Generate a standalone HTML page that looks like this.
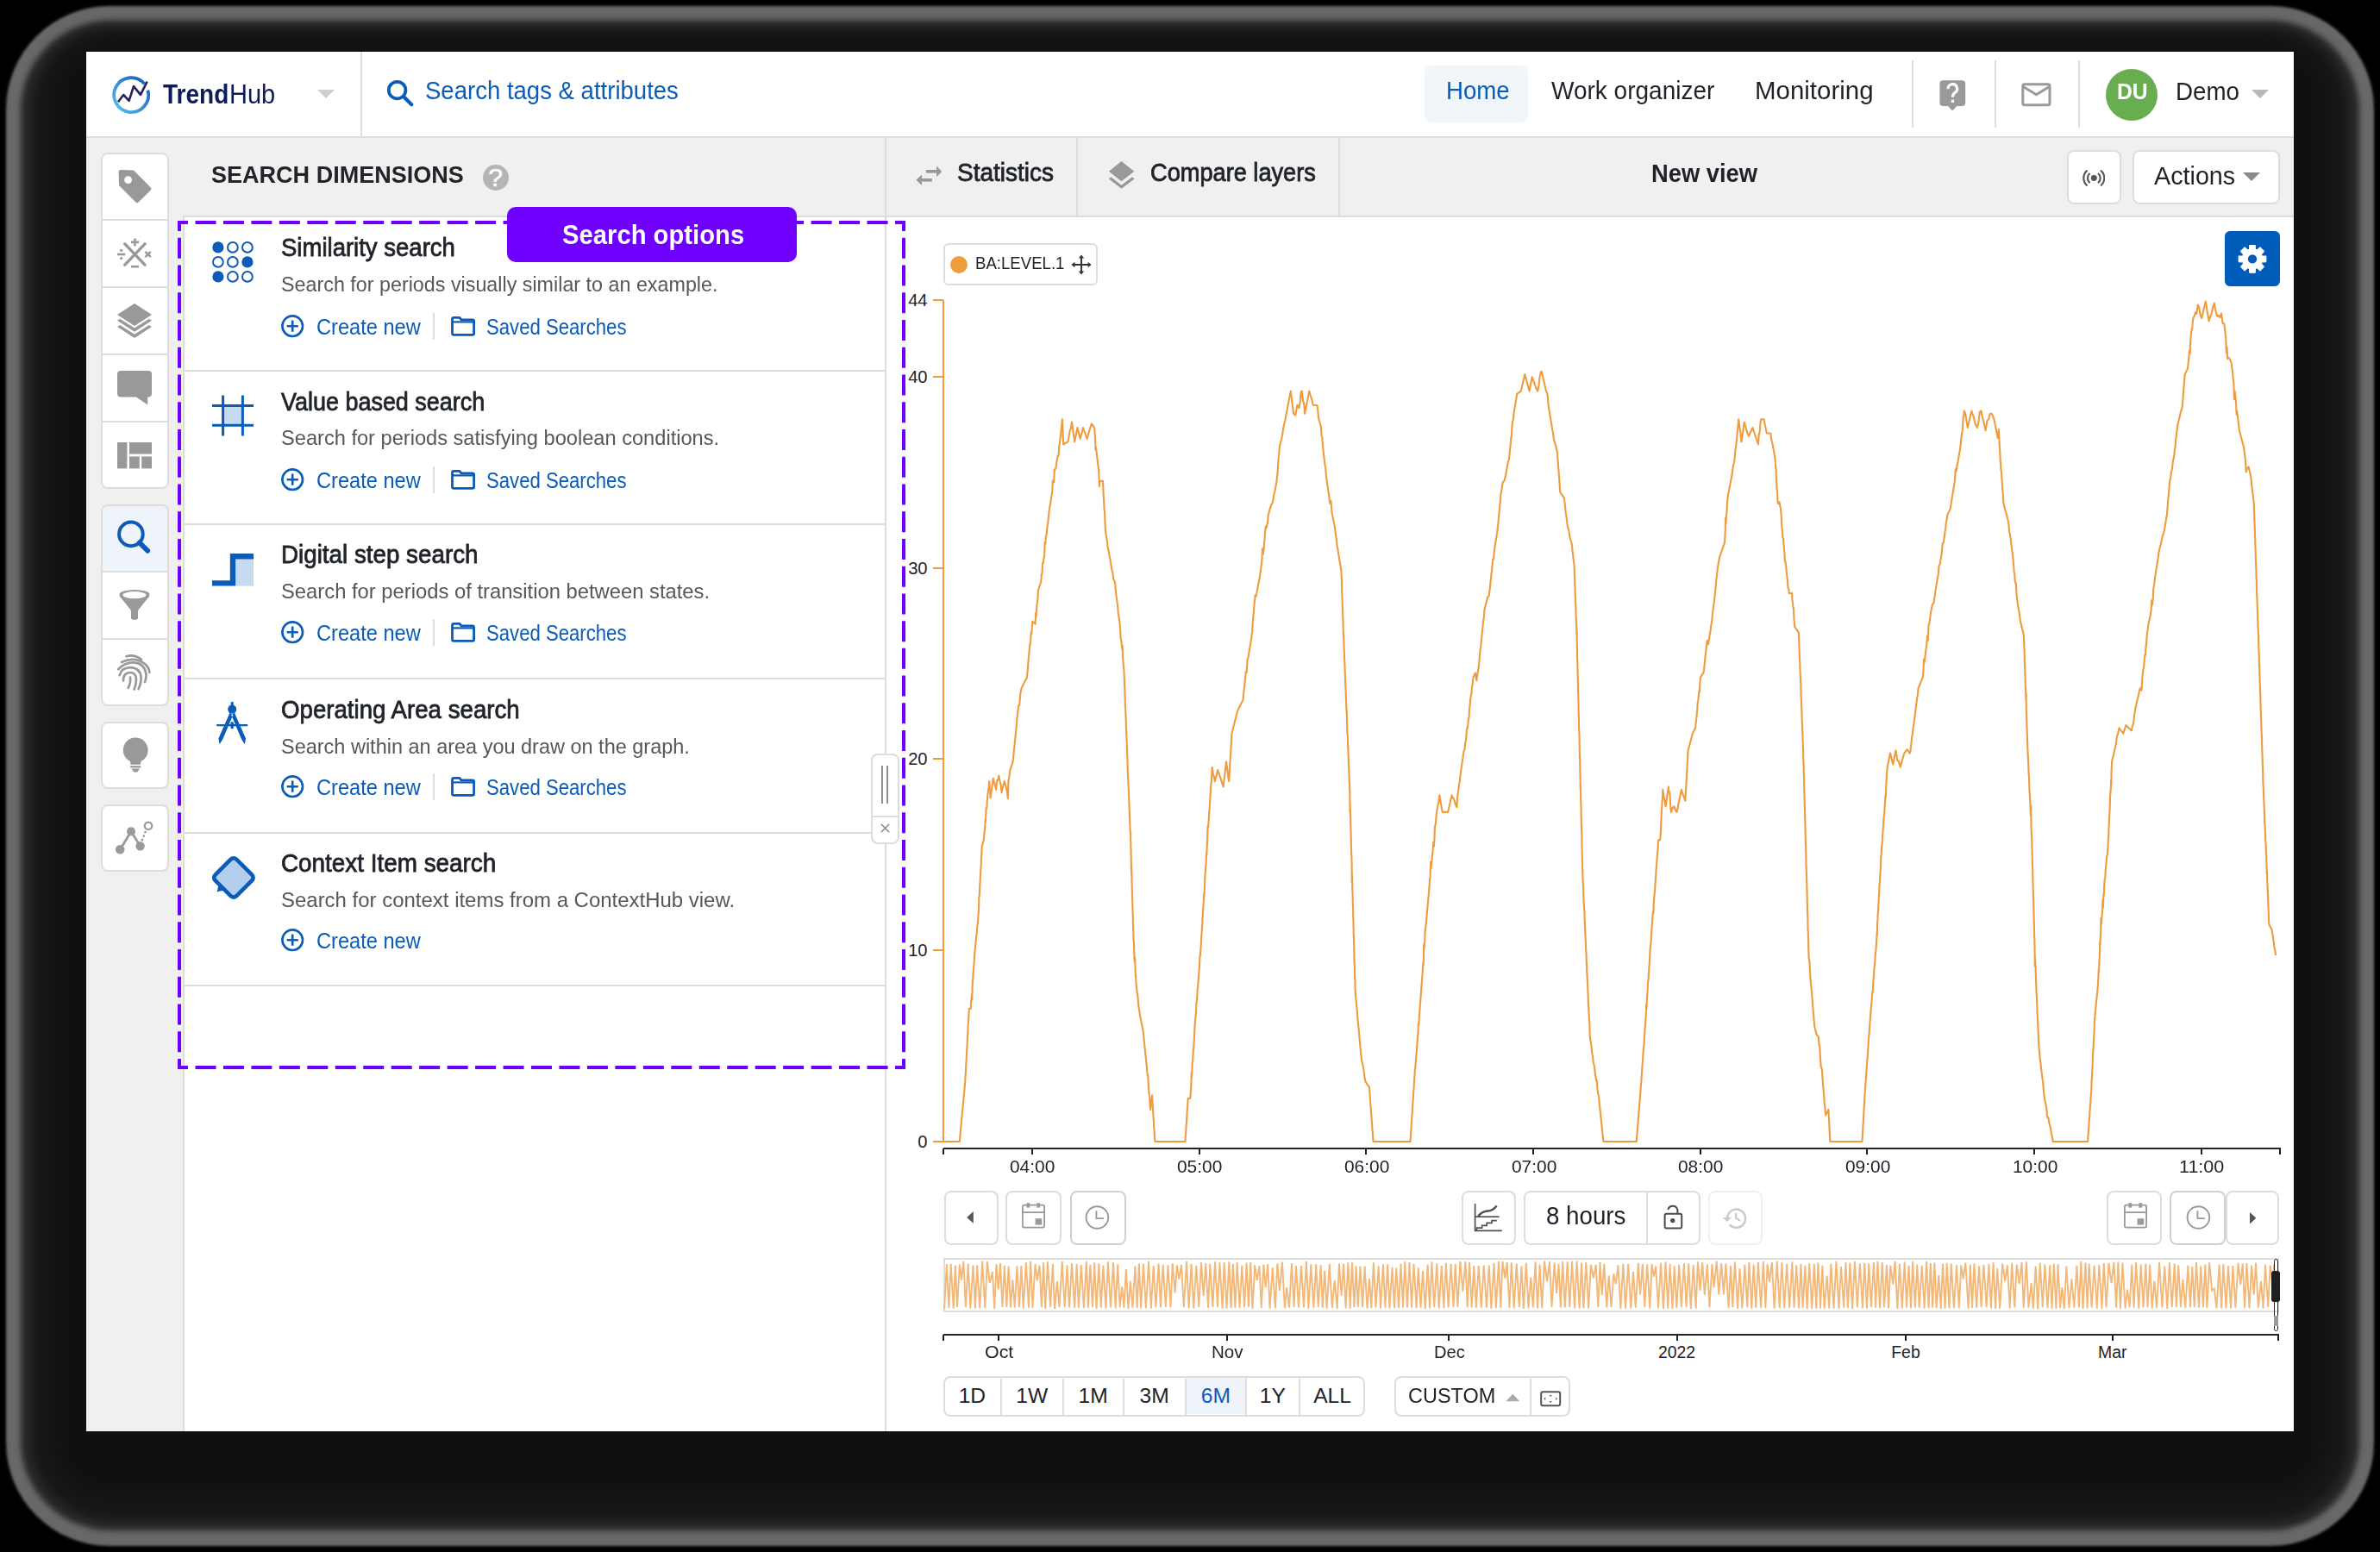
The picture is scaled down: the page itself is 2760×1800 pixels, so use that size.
<!DOCTYPE html>
<html><head><meta charset="utf-8"><title>TrendHub</title>
<style>
html,body{margin:0;padding:0;}
body{width:2760px;height:1800px;background:#000;position:relative;overflow:hidden;font-family:"Liberation Sans", sans-serif;}
.abs{position:absolute;}
.t{position:absolute;white-space:pre;font-family:"Liberation Sans", sans-serif;}
.sh{position:absolute;}
#win{position:absolute;left:50px;top:30px;width:1280px;height:800px;zoom:2;background:#fff;overflow:hidden;}
</style></head><body>
<div class=sh style="left:7px;top:7px;width:2746px;height:1786px;border-radius:120px;background:#686868;filter:blur(1.5px)"></div>
<div class=sh style="left:24px;top:24px;width:2712px;height:1751px;border-radius:104px;background:#2a2a2a;filter:blur(3px)"></div>
<div class=sh style="left:36px;top:34px;width:2688px;height:1729px;border-radius:92px;background:#181818;filter:blur(6px)"></div><div class=sh style="left:62px;top:46px;width:2636px;height:1690px;border-radius:60px;background:#101010;filter:blur(14px)"></div>
<div id=win>
<div class=abs style="left:0;top:0;width:1280px;height:49px;background:#fff;border-bottom:1px solid #dddddd"></div>
<svg class=abs style="left:12.4px;top:12.4px" width="26" height="26" viewBox="0 0 26 26">
<defs><linearGradient id="lg" x1="0" y1="1" x2="1" y2="0"><stop offset="0" stop-color="#5cc0ea"/><stop offset="1" stop-color="#0b5cbc"/></linearGradient></defs>
<path d="M21.3 6.2 A10 10 0 1 0 23.2 9.8" fill="none" stroke="url(#lg)" stroke-width="1.9"/>
<polyline points="6.0,16.6 9.1,12.5 12.3,15.9 15.0,7.6 19.0,12.4 22.8,4.8" fill="none" stroke="#26215e" stroke-width="1.3" stroke-linejoin="round"/>
</svg>
<div class=t style="left:44.65px;top:17.31px;font-size:15.40px;line-height:15.40px;font-weight:700;color:#0c1c5c;transform:scaleX(0.9106);transform-origin:0 0;">Trend</div>
<div class=t style="left:82.93px;top:17.31px;font-size:15.40px;line-height:15.40px;font-weight:400;color:#0c1c5c;transform:scaleX(0.9421);transform-origin:0 0;">Hub</div>
<svg class=abs style="left:134px;top:22px" width="10" height="5" viewBox="0 0 10 5"><path d="M0 0H10L5 5Z" fill="#cfcfcf"/></svg>
<div class=abs style="left:159px;top:0;width:1px;height:49px;background:#dddddd"></div>
<svg class=abs style="left:174px;top:16px" width="16" height="16" viewBox="0 0 16 16">
<circle cx="6.3" cy="6.3" r="4.9" fill="none" stroke="#0a5cb8" stroke-width="1.9"/>
<path d="M9.9 9.9 L14.6 14.6" stroke="#0a5cb8" stroke-width="2.1" stroke-linecap="round"/></svg>
<div class=t style="left:196.52px;top:15.65px;font-size:14.30px;line-height:14.30px;font-weight:400;color:#0a5cb8;transform:scaleX(0.9630);transform-origin:0 0;">Search tags &amp; attributes</div>
<div class=abs style="left:776px;top:8px;width:60px;height:33px;background:#f1f6fb;border-radius:4px"></div>
<div class=t style="left:788.52px;top:15.65px;font-size:14.30px;line-height:14.30px;font-weight:400;color:#0a5cb8;transform:scaleX(0.9665);transform-origin:0 0;">Home</div>
<div class=t style="left:849.41px;top:15.65px;font-size:14.30px;line-height:14.30px;font-weight:400;color:#1f2329;transform:scaleX(0.9792);transform-origin:0 0;">Work organizer</div>
<div class=t style="left:967.48px;top:15.65px;font-size:14.30px;line-height:14.30px;font-weight:400;color:#1f2329;transform:scaleX(1.0302);transform-origin:0 0;">Monitoring</div>
<div class=abs style="left:1058.5px;top:5px;width:1px;height:39px;background:#dddddd"></div>
<div class=abs style="left:1106.5px;top:5px;width:1px;height:39px;background:#dddddd"></div>
<div class=abs style="left:1155.0px;top:5px;width:1px;height:39px;background:#dddddd"></div>
<svg class=abs style="left:1074px;top:16px" width="17" height="19" viewBox="0 0 17 19">
<path d="M2.7 0.6 H13.6 A2 2 0 0 1 15.6 2.6 V13.5 A2 2 0 0 1 13.6 15.5 H10.6 L8.05 18.2 L5.5 15.5 H2.7 A2 2 0 0 1 0.7 13.5 V2.6 A2 2 0 0 1 2.7 0.6 Z" fill="#9a9a9a"/>
<path d="M5.6 5.6 A2.6 2.6 0 1 1 9.6 7.6 C8.6 8.4 8.2 8.9 8.2 10.4" fill="none" stroke="#fff" stroke-width="1.6"/>
<rect x="7.35" y="11.8" width="1.7" height="1.7" fill="#fff"/></svg>
<svg class=abs style="left:1121px;top:17px" width="20" height="16" viewBox="0 0 20 16">
<rect x="1.9" y="1.9" width="15.6" height="12" rx="1" fill="none" stroke="#9a9a9a" stroke-width="1.5"/>
<path d="M2.3 3.4 L9.7 7.9 L17.1 3.4" fill="none" stroke="#9a9a9a" stroke-width="1.5"/></svg>
<div class=abs style="left:1171px;top:10px;width:30px;height:30px;border-radius:50%;background:#68ad4f"></div>
<div class=t style="left:1177.32px;top:17.16px;font-size:12.80px;line-height:12.80px;font-weight:700;color:#ffffff;transform:scaleX(0.9663);transform-origin:0 0;">DU</div>
<div class=t style="left:1211.62px;top:15.90px;font-size:14.30px;line-height:14.30px;font-weight:400;color:#1f2329;transform:scaleX(0.9692);transform-origin:0 0;">Demo</div>
<svg class=abs style="left:1255.5px;top:22px" width="10" height="5" viewBox="0 0 10 5"><path d="M0 0H10L5 5Z" fill="#b9b9b9"/></svg>
<div class=abs style="left:0;top:50px;width:1280px;height:750px;background:#f0f0f0"></div>
<div class=abs style="left:463.5px;top:95px;width:816.5px;height:1px;background:#dddddd"></div>
<svg class=abs style="left:480px;top:65px" width="17" height="14" viewBox="0 0 17 14">
<rect x="7" y="3.5" width="6.3" height="1.8" fill="#999"/><path d="M13 1.3 L16.1 4.45 L13 7.6 Z" fill="#999"/>
<rect x="4.3" y="8.5" width="6.1" height="1.8" fill="#999"/><path d="M4.5 6.2 L1.2 9.4 L4.5 12.5 Z" fill="#999"/></svg>
<div class=t style="left:505.01px;top:62.90px;font-size:14.30px;line-height:14.30px;font-weight:400;color:#1f2329;transform:scaleX(0.9784);transform-origin:0 0;-webkit-text-stroke:0.4px #1f2329;">Statistics</div>
<div class=abs style="left:574px;top:50px;width:1px;height:45px;background:#dddddd"></div>
<svg class=abs style="left:592px;top:63px" width="17" height="17" viewBox="0 0 17 17">
<path d="M8.26 0.55 L15.66 6.43 L8.26 12.08 L0.94 6.43 Z" fill="#999"/>
<path d="M0.94 10.7 L2.17 9.6 L8.26 14.4 L14.5 9.6 L15.8 10.7 L8.26 16.43 Z" fill="#999"/></svg>
<div class=t style="left:616.92px;top:62.90px;font-size:14.30px;line-height:14.30px;font-weight:400;color:#1f2329;transform:scaleX(0.9507);transform-origin:0 0;-webkit-text-stroke:0.4px #1f2329;">Compare layers</div>
<div class=abs style="left:726px;top:50px;width:1px;height:45px;background:#dddddd"></div>
<div class=t style="left:907.53px;top:63.54px;font-size:14.60px;line-height:14.60px;font-weight:700;color:#1f2329;transform:scaleX(0.9365);transform-origin:0 0;">New view</div>
<div class=abs style="left:1148.5px;top:57px;width:29.5px;height:29.5px;background:#fff;border:1px solid #dddddd;border-radius:4px"></div>
<svg class=abs style="left:1157.4px;top:67.3px" width="13.3" height="11.6" viewBox="0 0 16 14">
<circle cx="8" cy="7" r="2.1" fill="#555"/>
<path d="M5.1 3.6 A4.5 4.5 0 0 0 5.1 10.4 M10.9 3.6 A4.5 4.5 0 0 1 10.9 10.4" fill="none" stroke="#555" stroke-width="1.3"/>
<path d="M3.3 1.6 A7 7 0 0 0 3.3 12.4 M12.7 1.6 A7 7 0 0 1 12.7 12.4" fill="none" stroke="#555" stroke-width="1.3"/></svg>
<div class=abs style="left:1186.5px;top:57px;width:83.5px;height:29.5px;background:#fff;border:1px solid #dddddd;border-radius:4px"></div>
<div class=t style="left:1199.20px;top:65.00px;font-size:14.30px;line-height:14.30px;font-weight:400;color:#1f2329;transform:scaleX(1.0045);transform-origin:0 0;">Actions</div>
<svg class=abs style="left:1250.7px;top:70.2px" width="10" height="5" viewBox="0 0 10 5"><path d="M0 0H10L5 5Z" fill="#8a8a8a"/></svg>
<div class=abs style="left:8.5px;top:58.5px;width:37.5px;height:193px;background:#fff;border:1px solid #dddddd;border-radius:4px;overflow:hidden"><div class=abs style="left:0;top:37.5px;width:37.5px;height:1px;background:#dddddd"></div><div class=abs style="left:0;top:76.5px;width:37.5px;height:1px;background:#dddddd"></div><div class=abs style="left:0;top:115.5px;width:37.5px;height:1px;background:#dddddd"></div><div class=abs style="left:0;top:154.5px;width:37.5px;height:1px;background:#dddddd"></div></div>
<div class=abs style="left:8.5px;top:262.5px;width:37.5px;height:115px;background:#fff;border:1px solid #dddddd;border-radius:4px;overflow:hidden"><div class=abs style="left:0;top:0px;width:37.5px;height:38.5px;background:#eef4fa"></div><div class=abs style="left:0;top:37.5px;width:37.5px;height:1px;background:#dddddd"></div><div class=abs style="left:0;top:76.5px;width:37.5px;height:1px;background:#dddddd"></div></div>
<div class=abs style="left:8.5px;top:388.5px;width:37.5px;height:37px;background:#fff;border:1px solid #dddddd;border-radius:4px;overflow:hidden"></div>
<div class=abs style="left:8.5px;top:436.5px;width:37.5px;height:37px;background:#fff;border:1px solid #dddddd;border-radius:4px;overflow:hidden"></div>
<svg class=abs style="left:18px;top:67.8px" width="21" height="21" viewBox="0 0 21 21"><path d="M0.8 2.1 Q0.7 0.4 2.2 0.5 L9.5 0.8 L19.4 10.7 Q20.2 11.5 19.4 12.3 L12.3 19.3 Q11.5 20.1 10.7 19.3 L1.1 9.6 Z" fill="#999999"/><circle cx="6.3" cy="6.3" r="2.2" fill="#fff"/></svg>
<svg class=abs style="left:18px;top:107px" width="21" height="21" viewBox="0 0 21 21"><path d="M4.4 4.4 L16 16.6 M16 4.4 L4.4 16.6" stroke="#999999" stroke-width="1.7" stroke-linecap="round"/><path d="M10.26 1.2 V5.7 M8 3.45 H12.5" stroke="#999999" stroke-width="1.3"/><path d="M8 17.6 H12.5" stroke="#999999" stroke-width="1.3"/><path d="M0 10.5 H4.6" stroke="#999999" stroke-width="1.3"/><circle cx="2.3" cy="8.2" r=".8" fill="#999999"/><circle cx="2.3" cy="12.8" r=".8" fill="#999999"/><path d="M16.2 8.9 L19.4 12.1 M19.4 8.9 L16.2 12.1" stroke="#999999" stroke-width="1.2"/></svg>
<svg class=abs style="left:18px;top:146px" width="20" height="20" viewBox="0 0 20 20"><path d="M0 6.5 L10 0 L20 6.5 L10 13 Z" fill="#999999"/><path d="M0 9.9 L1.6 8.9 L10 14.3 L18.4 8.9 L20 9.9 L10 16.4 Z" fill="#999999"/><path d="M0 13.5 L1.6 12.5 L10 17.9 L18.4 12.5 L20 13.5 L10 20 Z" fill="#999999"/></svg>
<svg class=abs style="left:18px;top:184.9px" width="20" height="20" viewBox="0 0 20 20"><path d="M2 0 H18 A2 2 0 0 1 20 2 V13.2 A2 2 0 0 1 18 15.2 H17.6 V19.8 L11 15.2 H2 A2 2 0 0 1 0 13.2 V2 A2 2 0 0 1 2 0 Z" fill="#999999"/></svg>
<svg class=abs style="left:18px;top:226.4px" width="20" height="16" viewBox="0 0 20 16"><rect x="0" y="0" width="5.7" height="15.2" fill="#999999"/><rect x="7" y="0" width="13" height="6.8" fill="#999999"/><rect x="7" y="8.2" width="5.9" height="7" fill="#999999"/><rect x="14.1" y="8.2" width="5.9" height="7" fill="#999999"/></svg>
<svg class=abs style="left:18px;top:271.7px" width="21" height="21" viewBox="0 0 21 21"><circle cx="7.95" cy="8.2" r="6.9" fill="none" stroke="#0a5cb8" stroke-width="2"/><path d="M12.9 13.2 L17.6 17.9" stroke="#0a5cb8" stroke-width="2.9" stroke-linecap="round"/></svg>
<svg class=abs style="left:18px;top:312.2px" width="20" height="18" viewBox="0 0 20 18"><path d="M1.2 2.7 A8.8 2.7 0 0 1 18.8 2.7 Q18.8 3.8 17.6 5 L13.6 10 Q12 11.5 12 12.6 V16.5 Q12 17.4 10 17.4 Q8 17.4 8 16.5 V12.6 Q8 11.5 6.4 10 L2.4 5 Q1.2 3.8 1.2 2.7 Z" fill="#999999"/><ellipse cx="9.95" cy="3.05" rx="6.8" ry="2.1" fill="#fff"/></svg>
<svg class=abs style="left:18px;top:349.7px" width="20" height="21" viewBox="0 0 20 21"><g fill="none" stroke="#999999" stroke-width="1.35" stroke-linecap="round"><path d="M5.2 1.1 Q10 -0.2 14 3"/><path d="M2.5 4.5 Q10 0.8 16.2 5.6 Q18.6 8 18.7 10.5"/><path d="M0.6 8.6 Q5 4.2 10.5 4.8 Q16 5.6 16.7 11.6 Q16.9 14 16 16"/><path d="M1.3 12.1 Q2.4 7.5 8 7.6 Q13.5 8 13.8 13.5 Q13.9 16.5 12.3 20"/><path d="M3.5 15.2 Q3.5 10.4 7.8 10.5 Q11 10.8 11 14.5 Q11 17.5 9.8 20.2"/><path d="M7.5 13.3 Q8 16 6.4 19.4"/></g></svg>
<svg class=abs style="left:18px;top:397.5px" width="20" height="21" viewBox="0 0 20 21"><circle cx="10.6" cy="7.5" r="7.2" fill="#999999"/><path d="M7.2 12 H14 L13.4 15.9 H7.8 Z" fill="#999999"/><rect x="7.6" y="16.6" width="6" height="1.1" fill="#999999"/><path d="M8.2 18.2 H13 L11.6 20.3 H9.6 Z" fill="#999999"/></svg>
<svg class=abs style="left:15px;top:445px" width="24" height="22" viewBox="0 0 24 22"><path d="M4.7 17.6 L11 7.1 L16.3 15.6" fill="none" stroke="#999999" stroke-width="1.4"/><circle cx="4.6" cy="17.6" r="2.65" fill="#999999"/><circle cx="11" cy="7.1" r="2.5" fill="#999999"/><circle cx="16.3" cy="15.6" r="2.6" fill="#999999"/><path d="M17.2 12.6 L19.6 6.8" stroke="#999999" stroke-width="1.2" stroke-dasharray="1.3 1.1"/><circle cx="21" cy="3.9" r="2.1" fill="none" stroke="#999999" stroke-width="1.1"/></svg>
<div class=t style="left:72.27px;top:63.88px;font-size:14.20px;line-height:14.20px;font-weight:700;color:#212529;transform:scaleX(0.9519);transform-origin:0 0;">SEARCH DIMENSIONS</div>
<div class=abs style="left:229.75px;top:65.6px;width:15px;height:15px;border-radius:50%;background:#b5b5b5"></div>
<div class=t style="left:233.13px;top:65.60px;font-size:15.00px;line-height:15.00px;font-weight:400;color:#ffffff;-webkit-text-stroke:0.25px #fff;">?</div>
<div class=abs style="left:56px;top:95px;width:407.5px;height:705px;background:#fff;border-left:1px solid #dddddd;border-top:1px solid #dddddd"></div>
<div class=abs style="left:57px;top:184.5px;width:406.5px;height:1px;background:#dddddd"></div>
<div class=abs style="left:57px;top:273.5px;width:406.5px;height:1px;background:#dddddd"></div>
<div class=abs style="left:57px;top:363.2px;width:406.5px;height:1px;background:#dddddd"></div>
<div class=abs style="left:57px;top:452.3px;width:406.5px;height:1px;background:#dddddd"></div>
<div class=abs style="left:57px;top:541.1px;width:406.5px;height:1px;background:#dddddd"></div>
<div class=abs style="left:463px;top:50px;width:1px;height:750px;background:#dddddd"></div>
<div class=t style="left:113.22px;top:106.65px;font-size:14.30px;line-height:14.30px;font-weight:400;color:#1f2329;transform:scaleX(0.9626);transform-origin:0 0;-webkit-text-stroke:0.4px #1f2329;">Similarity search</div>
<div class=t style="left:113.22px;top:128.92px;font-size:12.20px;line-height:12.20px;font-weight:400;color:#575757;transform:scaleX(0.9555);transform-origin:0 0;">Search for periods visually similar to an example.</div>
<svg class=abs style="left:113.2px;top:152.4px" width="14" height="14" viewBox="0 0 14 14"><circle cx="6.6" cy="6.6" r="5.9" fill="none" stroke="#0a5cb8" stroke-width="1.3"/><path d="M6.6 3.3 V9.9 M3.3 6.6 H9.9" stroke="#0a5cb8" stroke-width="1.3"/></svg>
<div class=t style="left:133.53px;top:153.33px;font-size:12.60px;line-height:12.60px;font-weight:400;color:#0a5cb8;transform:scaleX(0.9378);transform-origin:0 0;">Create new</div>
<div class=abs style="left:201.2px;top:151.3px;width:1px;height:15.6px;background:#dddddd"></div>
<svg class=abs style="left:211.6px;top:153.4px" width="15" height="12" viewBox="0 0 15 12"><path d="M0.75 1.6 Q0.75 0.7 1.6 0.7 H4.9 L6 1.9 H12.4 Q13.3 1.9 13.3 2.8 V9.9 Q13.3 10.7 12.4 10.7 H1.6 Q0.75 10.7 0.75 9.9 Z" fill="none" stroke="#0a5cb8" stroke-width="1.4"/><path d="M0.75 3.2 H13.3" stroke="#0a5cb8" stroke-width="1.1"/></svg>
<div class=t style="left:231.95px;top:153.33px;font-size:12.60px;line-height:12.60px;font-weight:400;color:#0a5cb8;transform:scaleX(0.8790);transform-origin:0 0;">Saved Searches</div>
<div class=t style="left:113.23px;top:195.80px;font-size:14.30px;line-height:14.30px;font-weight:400;color:#1f2329;transform:scaleX(0.9426);transform-origin:0 0;-webkit-text-stroke:0.4px #1f2329;">Value based search</div>
<div class=t style="left:113.21px;top:218.17px;font-size:12.20px;line-height:12.20px;font-weight:400;color:#575757;transform:scaleX(0.9683);transform-origin:0 0;">Search for periods satisfying boolean conditions.</div>
<svg class=abs style="left:113.2px;top:241.6px" width="14" height="14" viewBox="0 0 14 14"><circle cx="6.6" cy="6.6" r="5.9" fill="none" stroke="#0a5cb8" stroke-width="1.3"/><path d="M6.6 3.3 V9.9 M3.3 6.6 H9.9" stroke="#0a5cb8" stroke-width="1.3"/></svg>
<div class=t style="left:133.53px;top:242.53px;font-size:12.60px;line-height:12.60px;font-weight:400;color:#0a5cb8;transform:scaleX(0.9378);transform-origin:0 0;">Create new</div>
<div class=abs style="left:201.2px;top:240.5px;width:1px;height:15.6px;background:#dddddd"></div>
<svg class=abs style="left:211.6px;top:242.6px" width="15" height="12" viewBox="0 0 15 12"><path d="M0.75 1.6 Q0.75 0.7 1.6 0.7 H4.9 L6 1.9 H12.4 Q13.3 1.9 13.3 2.8 V9.9 Q13.3 10.7 12.4 10.7 H1.6 Q0.75 10.7 0.75 9.9 Z" fill="none" stroke="#0a5cb8" stroke-width="1.4"/><path d="M0.75 3.2 H13.3" stroke="#0a5cb8" stroke-width="1.1"/></svg>
<div class=t style="left:231.95px;top:242.53px;font-size:12.60px;line-height:12.60px;font-weight:400;color:#0a5cb8;transform:scaleX(0.8790);transform-origin:0 0;">Saved Searches</div>
<div class=t style="left:113.21px;top:284.50px;font-size:14.30px;line-height:14.30px;font-weight:400;color:#1f2329;transform:scaleX(0.9714);transform-origin:0 0;-webkit-text-stroke:0.4px #1f2329;">Digital step search</div>
<div class=t style="left:113.21px;top:306.87px;font-size:12.20px;line-height:12.20px;font-weight:400;color:#575757;transform:scaleX(0.9751);transform-origin:0 0;">Search for periods of transition between states.</div>
<svg class=abs style="left:113.2px;top:330.09999999999997px" width="14" height="14" viewBox="0 0 14 14"><circle cx="6.6" cy="6.6" r="5.9" fill="none" stroke="#0a5cb8" stroke-width="1.3"/><path d="M6.6 3.3 V9.9 M3.3 6.6 H9.9" stroke="#0a5cb8" stroke-width="1.3"/></svg>
<div class=t style="left:133.53px;top:331.03px;font-size:12.60px;line-height:12.60px;font-weight:400;color:#0a5cb8;transform:scaleX(0.9378);transform-origin:0 0;">Create new</div>
<div class=abs style="left:201.2px;top:329.0px;width:1px;height:15.6px;background:#dddddd"></div>
<svg class=abs style="left:211.6px;top:331.09999999999997px" width="15" height="12" viewBox="0 0 15 12"><path d="M0.75 1.6 Q0.75 0.7 1.6 0.7 H4.9 L6 1.9 H12.4 Q13.3 1.9 13.3 2.8 V9.9 Q13.3 10.7 12.4 10.7 H1.6 Q0.75 10.7 0.75 9.9 Z" fill="none" stroke="#0a5cb8" stroke-width="1.4"/><path d="M0.75 3.2 H13.3" stroke="#0a5cb8" stroke-width="1.1"/></svg>
<div class=t style="left:231.95px;top:331.03px;font-size:12.60px;line-height:12.60px;font-weight:400;color:#0a5cb8;transform:scaleX(0.8790);transform-origin:0 0;">Saved Searches</div>
<div class=t style="left:113.22px;top:374.60px;font-size:14.30px;line-height:14.30px;font-weight:400;color:#1f2329;transform:scaleX(0.9670);transform-origin:0 0;-webkit-text-stroke:0.4px #1f2329;">Operating Area search</div>
<div class=t style="left:113.22px;top:396.97px;font-size:12.20px;line-height:12.20px;font-weight:400;color:#575757;transform:scaleX(0.9628);transform-origin:0 0;">Search within an area you draw on the graph.</div>
<svg class=abs style="left:113.2px;top:419.5px" width="14" height="14" viewBox="0 0 14 14"><circle cx="6.6" cy="6.6" r="5.9" fill="none" stroke="#0a5cb8" stroke-width="1.3"/><path d="M6.6 3.3 V9.9 M3.3 6.6 H9.9" stroke="#0a5cb8" stroke-width="1.3"/></svg>
<div class=t style="left:133.53px;top:420.43px;font-size:12.60px;line-height:12.60px;font-weight:400;color:#0a5cb8;transform:scaleX(0.9378);transform-origin:0 0;">Create new</div>
<div class=abs style="left:201.2px;top:418.40000000000003px;width:1px;height:15.6px;background:#dddddd"></div>
<svg class=abs style="left:211.6px;top:420.5px" width="15" height="12" viewBox="0 0 15 12"><path d="M0.75 1.6 Q0.75 0.7 1.6 0.7 H4.9 L6 1.9 H12.4 Q13.3 1.9 13.3 2.8 V9.9 Q13.3 10.7 12.4 10.7 H1.6 Q0.75 10.7 0.75 9.9 Z" fill="none" stroke="#0a5cb8" stroke-width="1.4"/><path d="M0.75 3.2 H13.3" stroke="#0a5cb8" stroke-width="1.1"/></svg>
<div class=t style="left:231.95px;top:420.43px;font-size:12.60px;line-height:12.60px;font-weight:400;color:#0a5cb8;transform:scaleX(0.8790);transform-origin:0 0;">Saved Searches</div>
<div class=t style="left:113.21px;top:463.60px;font-size:14.30px;line-height:14.30px;font-weight:400;color:#1f2329;transform:scaleX(0.9743);transform-origin:0 0;-webkit-text-stroke:0.4px #1f2329;">Context Item search</div>
<div class=t style="left:113.21px;top:485.77px;font-size:12.20px;line-height:12.20px;font-weight:400;color:#575757;transform:scaleX(0.9825);transform-origin:0 0;">Search for context items from a ContextHub view.</div>
<svg class=abs style="left:113.2px;top:508.4px" width="14" height="14" viewBox="0 0 14 14"><circle cx="6.6" cy="6.6" r="5.9" fill="none" stroke="#0a5cb8" stroke-width="1.3"/><path d="M6.6 3.3 V9.9 M3.3 6.6 H9.9" stroke="#0a5cb8" stroke-width="1.3"/></svg>
<div class=t style="left:133.53px;top:509.33px;font-size:12.60px;line-height:12.60px;font-weight:400;color:#0a5cb8;transform:scaleX(0.9378);transform-origin:0 0;">Create new</div>
<svg class=abs style="left:72.9px;top:109.9px" width="24" height="24" viewBox="0 0 24 24"><circle cx="3.45" cy="3.45" r="3.3" fill="#0a5cb8" stroke="#0a5cb8" stroke-width="0"/><circle cx="11.95" cy="3.45" r="2.95" fill="none" stroke="#0a5cb8" stroke-width="1.0"/><circle cx="20.45" cy="3.45" r="2.95" fill="none" stroke="#0a5cb8" stroke-width="1.0"/><circle cx="3.45" cy="11.95" r="2.95" fill="none" stroke="#0a5cb8" stroke-width="1.0"/><circle cx="11.95" cy="11.95" r="2.95" fill="none" stroke="#0a5cb8" stroke-width="1.0"/><circle cx="20.45" cy="11.95" r="3.3" fill="#0a5cb8" stroke="#0a5cb8" stroke-width="0"/><circle cx="3.45" cy="20.45" r="3.3" fill="#0a5cb8" stroke="#0a5cb8" stroke-width="0"/><circle cx="11.95" cy="20.45" r="2.95" fill="none" stroke="#0a5cb8" stroke-width="1.0"/><circle cx="20.45" cy="20.45" r="2.95" fill="none" stroke="#0a5cb8" stroke-width="1.0"/></svg>
<svg class=abs style="left:72.9px;top:198.8px" width="24" height="24" viewBox="0 0 24 24"><rect x="6.3" y="6.2" width="11.4" height="11.4" fill="#c6dbf0"/><path d="M6.3 0.3 V23.8 M17.7 0.3 V23.8 M0 6.2 H24 M0 17.6 H24" stroke="#0a5cb8" stroke-width="1.5"/></svg>
<svg class=abs style="left:72.9px;top:291.1px" width="24" height="19" viewBox="0 0 24 19"><rect x="13.6" y="3.2" width="10.4" height="15.6" fill="#c6dbf0"/><path d="M0 17.2 H12 V1.6 H24" fill="none" stroke="#0a5cb8" stroke-width="3.2"/></svg>
<svg class=abs style="left:72.9px;top:377.2px" width="24" height="26" viewBox="0 0 24 26"><rect x="10.9" y="0" width="1.4" height="2.6" fill="#0a5cb8"/><circle cx="11.6" cy="4.3" r="2.5" fill="#0a5cb8"/><path d="M10.3 6.2 L12.1 7.6 L6.2 21.6 L4.3 24.6 L3.7 21.2 Z M12.9 6.2 L11.1 7.6 L17 21.6 L18.9 24.6 L19.5 21.2 Z" fill="#0a5cb8"/><path d="M2.6 13.6 H20.6" stroke="#0a5cb8" stroke-width="1.1"/><rect x="10.75" y="11.6" width="1.7" height="4" rx=".6" fill="#0a5cb8"/></svg>
<svg class=abs style="left:72.4px;top:466.2px" width="26" height="26" viewBox="0 0 26 26"><path d="M13 1.6 Q13.9 1.6 14.6 2.3 L23.5 11.2 Q24.3 12 24.3 13 Q24.3 13.9 23.5 14.7 L14.6 23.6 Q13.9 24.3 13 24.3 Q12 24.3 11.3 23.6 L2.4 14.7 Q1.6 13.9 1.6 13 Q1.6 12 2.4 11.2 L11.3 2.3 Q12 1.6 13 1.6 Z" fill="#b3cfee" stroke="#0a5cb8" stroke-width="2.3"/><path d="M4.2 17.6 L3.3 21.2 L7.3 20.2 Z" fill="#0a5cb8"/></svg>
<div class=abs style="left:464px;top:96px;width:816px;height:704px;background:#fff"></div>
<div class=abs style="left:1240px;top:104px;width:32px;height:32px;background:#005cb9;border-radius:3px"></div>
<svg class=abs style="left:1240px;top:104px" width="32" height="32" viewBox="0 0 32 32"><path d="M21.54 14.49 L23.89 14.60 L23.89 17.80 L21.54 17.91 L21.13 18.91 L22.71 20.65 L20.45 22.91 L18.71 21.33 L17.71 21.74 L17.60 24.09 L14.40 24.09 L14.29 21.74 L13.29 21.33 L11.55 22.91 L9.29 20.65 L10.87 18.91 L10.46 17.91 L8.11 17.80 L8.11 14.60 L10.46 14.49 L10.87 13.49 L9.29 11.75 L11.55 9.49 L13.29 11.07 L14.29 10.66 L14.40 8.31 L17.60 8.31 L17.71 10.66 L18.71 11.07 L20.45 9.49 L22.71 11.75 L21.13 13.49 Z" fill="#fff" stroke="#fff" stroke-width="0.6" stroke-linejoin="round"/><circle cx="16" cy="16.2" r="2.6" fill="#005cb9"/></svg>
<div class=abs style="left:496.8px;top:111px;width:87.5px;height:22.6px;background:#fff;border:1px solid #dddddd;border-radius:3px"></div>
<div class=abs style="left:501px;top:118.4px;width:10px;height:10px;border-radius:50%;background:#ef9c3e"></div>
<div class=t style="left:515.63px;top:117.68px;font-size:10.30px;line-height:10.30px;font-weight:400;color:#1f2329;transform:scaleX(0.9038);transform-origin:0 0;">BA:LEVEL.1</div>
<svg class=abs style="left:570.8px;top:117.5px" width="12" height="12" viewBox="0 0 12 12"><path d="M6 1 V11 M1 6 H11" stroke="#333" stroke-width="1"/><path d="M6 0.2 L4.4 2.2 H7.6 Z M6 11.8 L4.4 9.8 H7.6 Z M0.2 6 L2.2 4.4 V7.6 Z M11.8 6 L9.8 4.4 V7.6 Z" fill="#333"/></svg>
<div class=abs style="left:496.5px;top:144px;width:1px;height:488.5px;background:#ef9c3e"></div>
<div class=abs style="left:491px;top:631.50px;width:6px;height:1px;background:#ef9c3e"></div>
<div class=t style="left:482.18px;top:626.95px;font-size:10.10px;line-height:10.10px;font-weight:400;color:#1f2329;">0</div>
<div class=abs style="left:491px;top:520.60px;width:6px;height:1px;background:#ef9c3e"></div>
<div class=t style="left:476.57px;top:516.05px;font-size:10.10px;line-height:10.10px;font-weight:400;color:#1f2329;">10</div>
<div class=abs style="left:491px;top:409.70px;width:6px;height:1px;background:#ef9c3e"></div>
<div class=t style="left:476.57px;top:405.15px;font-size:10.10px;line-height:10.10px;font-weight:400;color:#1f2329;">20</div>
<div class=abs style="left:491px;top:298.80px;width:6px;height:1px;background:#ef9c3e"></div>
<div class=t style="left:476.57px;top:294.25px;font-size:10.10px;line-height:10.10px;font-weight:400;color:#1f2329;">30</div>
<div class=abs style="left:491px;top:187.90px;width:6px;height:1px;background:#ef9c3e"></div>
<div class=t style="left:476.57px;top:183.35px;font-size:10.10px;line-height:10.10px;font-weight:400;color:#1f2329;">40</div>
<div class=abs style="left:491px;top:143.54px;width:6px;height:1px;background:#ef9c3e"></div>
<div class=t style="left:476.57px;top:138.99px;font-size:10.10px;line-height:10.10px;font-weight:400;color:#1f2329;">44</div>
<div class=abs style="left:496.8px;top:635.5px;width:475.2px;height:1px;background:#1f2329"></div>
<div class=abs style="left:496.8px;top:635.5px;width:775.7px;height:1px;background:#1f2329"></div>
<div class=abs style="left:496.50px;top:636px;width:1px;height:3.5px;background:#1f2329"></div>
<div class=abs style="left:547.90px;top:636px;width:1px;height:3.5px;background:#1f2329"></div>
<div class=abs style="left:644.75px;top:636px;width:1px;height:3.5px;background:#1f2329"></div>
<div class=abs style="left:741.60px;top:636px;width:1px;height:3.5px;background:#1f2329"></div>
<div class=abs style="left:838.45px;top:636px;width:1px;height:3.5px;background:#1f2329"></div>
<div class=abs style="left:935.30px;top:636px;width:1px;height:3.5px;background:#1f2329"></div>
<div class=abs style="left:1032.15px;top:636px;width:1px;height:3.5px;background:#1f2329"></div>
<div class=abs style="left:1129.00px;top:636px;width:1px;height:3.5px;background:#1f2329"></div>
<div class=abs style="left:1225.85px;top:636px;width:1px;height:3.5px;background:#1f2329"></div>
<div class=abs style="left:1271.30px;top:636px;width:1px;height:3.5px;background:#1f2329"></div>
<div class=t style="left:535.70px;top:641.28px;font-size:10.30px;line-height:10.30px;font-weight:400;color:#1f2329;transform:scaleX(1.0138);transform-origin:0 0;">04:00</div>
<div class=t style="left:632.55px;top:641.28px;font-size:10.30px;line-height:10.30px;font-weight:400;color:#1f2329;transform:scaleX(1.0138);transform-origin:0 0;">05:00</div>
<div class=t style="left:729.40px;top:641.28px;font-size:10.30px;line-height:10.30px;font-weight:400;color:#1f2329;transform:scaleX(1.0138);transform-origin:0 0;">06:00</div>
<div class=t style="left:826.25px;top:641.28px;font-size:10.30px;line-height:10.30px;font-weight:400;color:#1f2329;transform:scaleX(1.0138);transform-origin:0 0;">07:00</div>
<div class=t style="left:923.10px;top:641.28px;font-size:10.30px;line-height:10.30px;font-weight:400;color:#1f2329;transform:scaleX(1.0138);transform-origin:0 0;">08:00</div>
<div class=t style="left:1019.95px;top:641.28px;font-size:10.30px;line-height:10.30px;font-weight:400;color:#1f2329;transform:scaleX(1.0138);transform-origin:0 0;">09:00</div>
<div class=t style="left:1116.80px;top:641.28px;font-size:10.30px;line-height:10.30px;font-weight:400;color:#1f2329;transform:scaleX(1.0138);transform-origin:0 0;">10:00</div>
<div class=t style="left:1213.63px;top:641.28px;font-size:10.30px;line-height:10.30px;font-weight:400;color:#1f2329;transform:scaleX(1.0457);transform-origin:0 0;">11:00</div>
<svg class=abs style="left:0;top:0" width="1280" height="800" viewBox="0 0 1280 800"><path d="M497.00 632.00 L500.13 632.00 L503.26 631.99 L506.39 631.99 L506.64 629.31 L506.89 626.63 L507.14 623.95 L507.39 621.27 L507.64 618.60 L507.89 615.92 L508.14 613.24 L508.39 610.56 L508.64 607.88 L508.89 605.20 L509.15 602.52 L509.40 599.84 L509.65 597.16 L509.79 593.41 L509.93 591.88 L510.07 589.23 L510.22 586.27 L510.36 584.43 L510.50 580.50 L510.64 578.65 L510.79 576.01 L510.93 573.36 L511.07 570.72 L511.21 568.08 L511.35 563.83 L511.50 562.79 L511.64 560.14 L511.78 557.50 L511.92 554.85 L512.90 554.85 L513.09 550.33 L513.28 549.43 L513.47 546.72 L513.66 549.90 L513.85 541.29 L514.04 538.58 L514.23 535.87 L514.42 533.16 L514.61 530.44 L514.80 528.89 L514.99 525.02 L515.18 522.31 L515.46 519.52 L515.74 516.73 L516.02 513.94 L516.29 511.70 L516.57 508.36 L516.85 505.57 L517.13 502.78 L517.27 500.13 L517.42 499.07 L517.56 494.85 L517.70 489.84 L517.84 489.56 L517.99 486.91 L518.13 484.27 L518.27 481.62 L518.41 478.98 L518.56 476.33 L518.70 473.69 L518.84 472.33 L518.98 468.40 L519.13 465.76 L519.27 463.11 L519.41 460.47 L520.39 457.21 L520.61 454.61 L520.84 452.01 L521.07 450.17 L521.30 445.43 L521.53 446.40 L521.75 438.70 L521.98 438.99 L522.21 437.84 L522.44 433.78 L522.66 431.18 L522.99 428.46 L523.32 426.56 L523.64 423.04 L523.86 426.29 L524.08 429.34 L524.29 432.80 L524.70 429.96 L525.11 427.11 L525.51 424.26 L525.92 421.41 L526.73 424.67 L527.55 427.92 L528.09 422.57 L528.63 422.25 L529.17 419.78 L529.72 422.86 L530.26 424.95 L530.80 429.55 L531.62 425.85 L532.43 423.04 L533.24 426.29 L534.06 429.55 L534.38 433.12 L534.71 422.70 L535.03 421.74 L535.36 419.13 L535.68 416.53 L537.31 411.65 L537.58 408.94 L537.85 406.22 L538.12 403.51 L538.40 400.80 L538.67 398.09 L538.94 395.37 L539.21 392.66 L539.48 389.95 L539.75 386.19 L540.02 384.53 L540.29 381.81 L540.57 379.10 L541.11 378.99 L541.65 372.06 L542.19 369.34 L542.84 368.03 L543.49 366.73 L544.15 365.18 L544.80 364.13 L545.45 362.83 L545.72 360.12 L545.99 357.40 L546.26 353.38 L546.53 350.09 L546.80 347.88 L547.07 343.80 L547.35 343.84 L547.62 341.13 L547.89 336.71 L548.16 337.67 L548.43 332.99 L548.70 330.28 L550.33 331.91 L550.56 325.42 L550.79 327.77 L551.03 323.54 L551.26 320.75 L551.49 318.89 L551.72 317.30 L551.96 312.38 L553.58 307.50 L553.91 303.03 L554.24 302.70 L554.56 296.35 L554.89 296.43 L555.21 293.67 L555.54 292.86 L555.86 284.47 L556.19 285.37 L556.51 280.58 L556.84 279.83 L557.16 276.14 L557.49 273.97 L557.82 271.05 L558.14 267.97 L558.47 265.19 L559.01 262.54 L559.55 258.68 L560.09 255.42 L560.42 248.79 L560.74 249.66 L561.07 249.67 L561.40 242.29 L561.72 242.40 L562.26 241.25 L562.81 236.98 L563.35 234.27 L563.76 234.29 L564.16 228.57 L564.57 225.72 L564.98 222.88 L565.30 219.62 L565.63 216.37 L565.95 213.11 L566.08 216.04 L566.21 219.05 L566.34 221.90 L566.47 224.83 L566.60 227.76 L567.90 226.94 L569.21 226.13 L569.78 223.28 L570.35 219.97 L570.92 218.31 L571.48 214.74 L571.89 217.59 L572.30 220.57 L572.71 223.28 L573.11 226.13 L573.65 223.42 L574.20 220.71 L574.74 217.99 L575.55 221.25 L576.37 224.50 L577.18 221.25 L577.99 217.99 L579.13 221.25 L580.27 224.50 L581.14 221.24 L582.01 218.65 L582.88 215.72 L584.50 217.99 L584.75 220.30 L584.99 223.69 L585.24 230.75 L585.48 229.39 L585.81 232.18 L586.13 234.97 L586.46 237.66 L586.78 240.54 L587.11 243.33 L587.43 252.09 L587.76 248.91 L589.39 248.91 L589.53 249.42 L589.68 253.76 L589.83 256.90 L589.98 259.57 L590.13 262.23 L590.27 264.89 L590.42 265.90 L590.57 268.49 L590.72 272.71 L590.87 275.54 L591.01 278.21 L591.48 281.00 L591.94 283.79 L592.41 288.03 L592.87 289.80 L593.34 292.60 L593.80 294.94 L594.27 297.73 L594.73 300.52 L595.20 302.27 L595.66 306.07 L596.13 306.49 L596.59 308.50 L597.06 314.18 L597.52 317.26 L597.85 319.87 L598.17 322.47 L598.50 326.43 L598.82 328.18 L599.15 330.28 L599.39 332.94 L599.62 335.61 L599.86 340.88 L600.10 340.93 L600.33 343.60 L600.57 346.26 L600.81 344.25 L601.04 351.58 L601.28 354.25 L601.52 356.91 L601.75 359.57 L601.86 362.27 L601.96 364.88 L602.06 367.54 L602.16 369.07 L602.27 372.85 L602.37 375.50 L602.47 379.60 L602.58 380.81 L602.68 383.47 L602.78 385.52 L602.88 388.78 L602.99 391.43 L603.09 394.09 L603.19 396.74 L603.30 399.40 L603.40 402.05 L603.50 404.71 L603.60 407.50 L603.71 410.02 L603.81 413.96 L603.91 416.95 L604.01 419.99 L604.12 422.09 L604.22 423.63 L604.32 425.95 L604.43 428.61 L604.53 431.26 L604.63 433.92 L604.73 436.57 L604.84 439.23 L604.94 441.37 L605.04 444.54 L605.15 447.19 L605.25 449.85 L605.35 452.48 L605.45 452.36 L605.56 452.63 L605.66 460.47 L605.74 462.22 L605.81 465.74 L605.89 468.37 L605.97 475.16 L606.05 471.42 L606.12 477.96 L606.20 475.68 L606.28 481.53 L606.36 484.18 L606.43 486.08 L606.51 489.45 L606.59 492.08 L606.67 494.72 L606.74 497.35 L606.82 499.99 L606.90 500.75 L606.98 505.23 L607.05 507.89 L607.13 510.53 L607.21 513.16 L607.29 515.80 L607.45 515.73 L607.61 521.50 L607.77 527.39 L607.94 525.14 L608.10 526.05 L608.26 531.42 L608.43 536.43 L608.59 535.36 L608.75 540.59 L608.91 541.83 L609.24 545.04 L609.56 546.58 L609.89 549.97 L610.22 553.50 L610.54 555.40 L610.87 558.11 L611.52 561.36 L612.17 564.62 L612.82 567.87 L613.08 570.48 L613.34 573.08 L613.60 575.68 L613.86 578.29 L614.12 580.89 L614.38 583.49 L614.64 586.10 L614.90 587.92 L615.16 591.31 L615.42 593.91 L615.66 593.67 L615.89 599.13 L616.12 602.28 L616.35 605.07 L616.59 606.10 L616.82 610.61 L617.05 613.44 L617.38 610.73 L617.70 608.01 L618.03 605.30 L618.19 607.97 L618.35 610.64 L618.52 613.31 L618.68 615.98 L618.84 618.65 L619.00 621.31 L619.17 623.98 L619.33 626.65 L619.49 629.32 L619.65 631.99 L622.58 631.99 L625.51 631.99 L628.44 631.99 L631.37 631.99 L634.30 631.99 L637.23 631.99 L637.41 629.20 L637.59 626.42 L637.77 623.64 L637.95 620.85 L638.13 618.07 L638.31 615.28 L638.50 612.50 L638.68 609.71 L638.86 606.93 L640.16 606.93 L640.33 604.25 L640.50 602.34 L640.68 598.89 L640.85 591.91 L641.02 594.43 L641.19 591.35 L641.36 586.01 L641.54 585.49 L641.71 582.81 L641.88 579.47 L642.05 577.44 L642.23 575.87 L642.40 572.08 L642.57 569.40 L642.74 565.27 L642.92 563.88 L643.09 561.36 L643.29 558.72 L643.49 558.07 L643.70 551.72 L643.90 550.79 L644.10 548.85 L644.31 543.50 L644.51 542.85 L644.72 540.21 L644.92 537.56 L645.12 535.00 L645.33 532.27 L645.53 529.63 L645.73 523.93 L645.94 524.34 L646.14 520.80 L646.34 519.05 L646.49 516.45 L646.65 512.07 L646.80 511.24 L646.95 508.64 L647.10 507.38 L647.25 502.31 L647.41 500.83 L647.56 497.28 L647.71 495.62 L647.86 493.01 L648.01 490.41 L648.17 487.81 L648.32 489.38 L648.47 484.33 L648.62 480.00 L648.79 477.39 L648.96 474.79 L649.13 472.18 L649.30 471.57 L649.47 465.17 L649.64 466.00 L649.81 461.77 L649.97 459.30 L650.14 453.78 L650.31 448.98 L650.48 450.03 L650.65 448.75 L650.82 446.08 L650.99 444.09 L651.16 440.94 L651.33 438.34 L651.50 436.20 L651.67 433.13 L651.84 430.52 L652.01 427.92 L652.17 425.32 L652.34 423.87 L652.51 421.38 L652.68 417.51 L652.85 414.90 L653.39 418.99 L653.94 420.39 L654.48 423.04 L655.29 419.78 L656.11 416.53 L657.19 419.78 L658.28 423.04 L659.36 426.29 L659.69 422.64 L660.01 420.44 L660.34 417.51 L660.66 414.58 L660.99 411.65 L661.40 414.50 L661.80 417.34 L662.21 421.07 L662.62 423.04 L662.78 420.27 L662.94 417.51 L663.10 413.68 L663.27 411.97 L663.43 409.21 L663.59 406.44 L663.76 403.67 L663.92 400.91 L664.08 397.82 L664.24 395.37 L664.89 392.77 L665.55 390.17 L666.20 387.56 L666.85 384.96 L667.50 382.36 L668.15 381.05 L668.80 379.75 L669.45 378.32 L670.10 377.15 L670.75 375.85 L671.02 373.13 L671.30 369.86 L671.57 368.38 L671.84 365.00 L672.11 362.29 L672.38 359.57 L672.84 359.96 L673.31 352.65 L673.77 351.20 L674.24 348.41 L674.70 345.62 L675.17 342.83 L675.63 340.04 L675.87 337.26 L676.10 336.89 L676.33 331.68 L676.56 328.89 L676.80 326.10 L677.03 323.31 L677.26 320.52 L677.80 315.20 L678.35 315.80 L678.89 312.76 L679.43 309.67 L679.97 306.96 L680.52 304.24 L680.89 301.45 L681.26 298.66 L681.63 295.87 L682.00 288.16 L682.38 291.41 L682.75 289.05 L683.12 284.72 L683.50 279.18 L683.88 275.32 L684.26 276.28 L684.64 274.40 L685.02 273.18 L685.40 268.44 L686.21 265.59 L687.03 262.93 L687.84 261.67 L688.65 257.05 L689.20 254.91 L689.74 251.73 L690.28 248.91 L690.51 246.12 L690.75 244.63 L690.98 241.00 L691.21 237.75 L691.44 233.97 L691.68 232.86 L691.91 229.39 L692.48 226.54 L693.05 224.82 L693.62 221.60 L694.19 217.99 L694.71 215.39 L695.23 213.48 L695.75 210.18 L696.27 207.85 L696.79 204.98 L697.33 202.26 L697.87 199.55 L698.42 196.84 L698.74 199.44 L699.07 202.05 L699.39 204.65 L699.72 207.25 L700.04 209.86 L701.13 210.82 L702.21 204.86 L703.30 206.60 L703.84 203.35 L704.38 197.21 L704.93 196.84 L705.25 200.06 L705.58 202.44 L705.90 203.19 L706.23 205.13 L706.55 209.86 L707.07 207.25 L707.60 204.65 L708.12 202.05 L708.64 199.44 L709.16 196.84 L709.92 199.55 L710.68 201.71 L711.44 204.98 L713.71 204.98 L714.15 207.96 L714.58 212.49 L715.02 214.27 L715.45 215.71 L715.88 216.96 L716.32 222.88 L716.64 223.23 L716.97 228.57 L717.29 231.42 L717.62 234.27 L717.95 237.12 L718.27 239.96 L718.60 240.95 L718.92 245.66 L719.30 248.37 L719.68 251.08 L720.06 254.24 L720.44 256.21 L720.82 259.22 L721.20 261.93 L721.72 260.51 L722.24 267.14 L722.76 269.68 L723.28 272.35 L723.80 274.95 L724.18 277.66 L724.56 280.38 L724.94 282.84 L725.32 286.76 L725.70 288.51 L726.08 291.22 L726.62 294.48 L727.17 297.73 L727.71 300.99 L727.81 303.67 L727.90 306.35 L728.00 305.45 L728.09 314.43 L728.19 314.39 L728.28 317.60 L728.38 319.75 L728.48 323.95 L728.57 325.96 L728.67 328.78 L728.76 330.47 L728.86 334.57 L728.95 336.66 L729.05 338.51 L729.15 340.76 L729.24 343.87 L729.34 346.55 L729.44 349.18 L729.55 351.80 L729.65 354.43 L729.76 357.27 L729.86 359.68 L729.97 362.74 L730.07 365.71 L730.18 367.55 L730.28 370.01 L730.39 372.80 L730.49 376.22 L730.60 378.05 L730.70 380.68 L730.81 383.30 L730.91 382.28 L731.02 388.55 L731.12 391.17 L731.23 394.62 L731.33 396.42 L731.44 397.66 L731.54 401.67 L731.65 404.30 L731.75 406.92 L731.86 408.76 L731.96 413.31 L732.07 414.80 L732.17 417.42 L732.28 420.05 L732.38 422.67 L732.49 425.30 L732.59 427.92 L732.66 428.18 L732.74 441.13 L732.81 435.73 L732.88 438.48 L732.95 440.94 L733.03 443.54 L733.10 446.15 L733.17 448.75 L733.24 451.35 L733.31 453.96 L733.39 456.56 L733.46 460.93 L733.53 461.77 L733.60 464.37 L733.68 466.98 L733.75 469.58 L733.82 472.18 L733.89 481.54 L733.97 477.35 L734.04 480.00 L734.11 484.18 L734.18 486.29 L734.26 487.81 L734.33 490.41 L734.40 492.99 L734.47 495.62 L734.54 495.81 L734.62 500.83 L734.69 503.43 L734.76 506.84 L734.83 510.17 L734.91 512.40 L734.98 513.84 L735.05 516.45 L735.12 519.05 L735.20 521.66 L735.27 528.44 L735.34 526.36 L735.41 529.47 L735.48 532.07 L735.56 537.77 L735.63 537.28 L735.70 537.44 L735.77 542.49 L735.85 545.09 L736.10 548.42 L736.35 550.66 L736.60 553.19 L736.85 556.11 L737.10 558.86 L737.35 562.38 L737.60 564.37 L737.85 567.12 L738.10 569.88 L738.35 572.63 L738.60 575.38 L738.85 578.39 L739.10 580.89 L739.53 584.88 L739.97 586.58 L740.40 588.52 L740.84 591.36 L741.27 594.85 L741.70 597.16 L743.98 600.42 L744.17 603.05 L744.36 605.68 L744.55 608.31 L744.74 610.94 L744.93 613.57 L745.12 616.20 L745.31 618.84 L745.50 621.47 L745.69 624.10 L745.88 626.73 L746.07 629.36 L746.26 631.99 L748.95 631.99 L751.63 631.99 L754.32 631.99 L757.00 631.99 L759.69 631.99 L762.37 631.99 L765.06 631.99 L767.74 631.99 L767.92 629.31 L768.09 626.63 L768.27 623.95 L768.44 621.27 L768.62 618.60 L768.79 615.92 L768.97 613.24 L769.14 610.56 L769.32 607.88 L769.49 605.20 L769.67 602.52 L769.85 599.84 L770.02 597.16 L770.23 593.32 L770.43 590.31 L770.64 589.18 L770.85 586.51 L771.06 583.85 L771.26 581.91 L771.47 578.63 L771.68 575.86 L771.88 573.20 L772.09 570.54 L772.30 567.87 L772.49 563.15 L772.69 564.38 L772.88 560.06 L773.08 557.46 L773.28 554.85 L773.47 552.25 L773.67 549.65 L773.86 547.04 L774.06 544.44 L774.25 541.83 L774.44 539.58 L774.63 536.41 L774.82 534.44 L775.01 530.99 L775.20 528.27 L775.39 529.72 L775.58 517.66 L775.77 520.14 L775.96 517.42 L776.15 515.32 L776.34 508.94 L776.53 509.29 L776.78 506.53 L777.03 503.78 L777.28 501.03 L777.53 498.27 L777.78 495.35 L778.03 492.76 L778.28 490.01 L778.53 487.26 L778.78 483.84 L779.03 479.19 L779.28 478.99 L779.53 469.89 L779.78 473.49 L780.06 470.77 L780.33 468.06 L780.60 465.11 L780.87 462.64 L781.14 458.25 L781.41 460.98 L781.68 457.24 L781.95 449.56 L782.23 448.76 L782.50 446.99 L782.77 443.65 L783.04 440.94 L783.58 437.79 L784.12 435.23 L784.67 431.18 L785.21 434.43 L785.75 437.69 L786.29 440.94 L787.92 440.94 L789.55 440.94 L790.31 437.69 L791.07 434.43 L791.83 431.18 L793.13 433.82 L794.43 437.69 L794.76 438.08 L795.08 431.54 L795.41 429.87 L795.73 427.37 L796.06 424.67 L796.44 422.60 L796.82 419.24 L797.20 416.35 L797.58 413.82 L797.96 411.11 L798.34 408.39 L798.77 405.68 L799.20 404.88 L799.64 400.94 L800.07 398.62 L800.51 392.64 L800.94 392.12 L801.21 389.41 L801.48 386.70 L801.75 386.32 L802.02 381.27 L802.30 379.30 L802.57 375.85 L802.89 373.62 L803.22 371.88 L803.54 368.03 L803.87 366.44 L804.19 362.83 L804.85 361.53 L805.50 360.22 L806.15 364.67 L806.80 360.47 L807.45 356.32 L807.72 353.61 L807.99 349.84 L808.26 347.06 L808.53 345.47 L808.81 342.76 L809.08 340.04 L809.35 337.33 L809.62 334.62 L809.89 331.91 L810.16 329.20 L810.43 328.13 L810.70 323.77 L811.35 321.17 L812.01 318.56 L812.66 315.96 L813.31 315.59 L813.96 310.75 L814.23 307.52 L814.50 305.45 L814.77 302.62 L815.04 300.85 L815.31 297.19 L815.59 294.48 L816.02 294.18 L816.45 289.05 L816.89 286.34 L817.32 283.63 L817.76 280.92 L818.19 278.21 L818.47 275.36 L818.76 272.72 L819.04 269.66 L819.33 266.81 L819.61 263.11 L819.90 261.12 L820.18 256.71 L820.47 255.42 L821.34 249.61 L822.20 248.91 L823.07 245.66 L823.53 243.06 L823.98 240.45 L824.44 237.85 L824.89 236.51 L825.35 232.64 L825.62 229.66 L825.89 227.69 L826.16 223.69 L826.43 223.18 L826.71 217.72 L826.98 214.74 L827.41 213.32 L827.85 209.32 L828.28 206.60 L828.71 203.89 L829.15 201.18 L829.58 198.47 L831.86 196.84 L832.62 193.58 L833.38 190.33 L834.14 187.07 L835.01 190.33 L835.87 193.31 L836.74 196.84 L837.28 194.13 L837.83 191.41 L838.37 188.70 L839.45 191.41 L840.54 194.85 L841.62 196.84 L842.19 193.99 L842.76 188.80 L843.33 185.92 L843.90 185.45 L844.55 188.30 L845.20 191.14 L845.85 193.99 L846.51 196.84 L846.94 197.68 L847.37 199.24 L847.81 204.87 L848.24 207.69 L848.68 210.40 L849.11 213.11 L849.56 215.72 L850.02 218.54 L850.48 220.92 L850.93 224.66 L851.39 226.13 L852.20 228.97 L853.01 232.64 L853.22 236.37 L853.42 238.34 L853.62 241.18 L853.83 244.03 L854.03 246.88 L854.24 249.73 L854.44 252.58 L854.64 255.42 L855.78 257.05 L856.92 258.68 L857.25 261.39 L857.57 264.10 L857.90 267.67 L858.22 269.53 L858.55 272.24 L858.87 274.95 L859.63 277.40 L860.39 282.18 L861.15 284.72 L861.48 285.87 L861.80 289.84 L862.13 292.53 L862.45 295.25 L862.78 297.73 L862.87 299.31 L862.97 303.09 L863.07 305.77 L863.16 308.46 L863.26 311.14 L863.35 314.74 L863.45 316.50 L863.54 319.18 L863.64 319.98 L863.74 324.54 L863.83 327.94 L863.93 328.65 L864.02 332.58 L864.12 335.26 L864.21 338.33 L864.31 335.22 L864.41 343.30 L864.47 344.68 L864.53 352.18 L864.60 352.06 L864.66 353.77 L864.73 356.38 L864.79 359.00 L864.85 361.77 L864.92 364.23 L864.98 366.85 L865.04 370.81 L865.11 372.08 L865.17 374.70 L865.24 377.31 L865.30 379.16 L865.36 385.00 L865.43 385.16 L865.49 387.78 L865.55 391.17 L865.62 393.01 L865.68 395.63 L865.75 395.63 L865.81 399.92 L865.87 403.90 L865.94 406.10 L866.00 409.96 L866.07 408.79 L866.13 413.95 L866.19 417.02 L866.26 419.93 L866.32 421.79 L866.38 427.79 L866.45 425.20 L866.51 428.20 L866.58 432.74 L866.64 434.50 L866.70 436.47 L866.77 438.66 L866.83 443.28 L866.89 445.34 L866.96 447.17 L867.02 449.13 L867.09 453.19 L867.15 451.88 L867.21 458.43 L867.28 461.04 L867.34 463.26 L867.41 466.28 L867.47 468.89 L867.53 471.51 L867.60 474.12 L867.66 476.74 L867.78 480.83 L867.90 480.90 L868.01 484.61 L868.13 487.23 L868.25 493.30 L868.37 492.43 L868.48 495.09 L868.60 497.28 L868.72 498.76 L868.84 502.96 L868.95 505.58 L869.07 508.20 L869.19 510.82 L869.31 513.45 L869.42 516.07 L869.54 518.69 L869.66 521.31 L869.78 523.93 L869.89 528.25 L870.01 529.18 L870.13 534.62 L870.25 534.42 L870.36 537.04 L870.48 539.67 L870.60 542.29 L870.72 544.91 L870.83 547.53 L870.95 551.96 L871.07 552.77 L871.19 555.70 L871.30 558.02 L871.42 560.64 L871.54 562.76 L871.66 562.23 L871.77 567.51 L871.89 571.13 L872.30 573.97 L872.71 576.47 L873.11 580.69 L873.52 582.52 L873.93 586.53 L874.33 587.41 L874.74 591.06 L875.15 593.91 L875.53 596.71 L875.91 596.69 L876.29 602.05 L876.67 604.76 L877.05 605.88 L877.42 610.18 L877.71 612.91 L877.99 615.63 L878.28 618.36 L878.56 621.09 L878.85 623.81 L879.13 626.54 L879.42 629.26 L879.70 631.99 L882.44 631.99 L885.18 631.99 L887.92 631.99 L890.66 631.99 L893.40 631.99 L896.14 631.99 L898.88 631.99 L899.10 629.16 L899.33 626.33 L899.56 623.49 L899.79 620.66 L900.02 617.83 L900.24 615.00 L900.47 612.17 L900.70 609.34 L900.93 606.51 L901.16 603.67 L901.35 600.82 L901.54 598.31 L901.73 596.66 L901.92 592.95 L902.11 590.27 L902.30 587.59 L902.50 585.66 L902.69 582.23 L902.88 579.55 L903.07 576.69 L903.26 576.30 L903.45 571.51 L903.64 568.83 L903.84 565.96 L904.03 563.47 L904.22 560.79 L904.41 558.11 L904.59 552.26 L904.77 554.85 L904.95 549.97 L905.13 546.79 L905.31 544.55 L905.49 539.77 L905.68 539.12 L905.86 536.41 L906.04 533.70 L906.22 530.99 L906.40 528.27 L906.58 525.56 L906.76 521.32 L906.94 519.05 L907.12 518.25 L907.30 516.22 L907.48 512.00 L907.66 509.29 L907.87 506.63 L908.08 503.96 L908.29 501.30 L908.49 498.64 L908.70 499.66 L908.91 493.31 L909.11 490.65 L909.32 488.40 L909.53 487.28 L909.74 482.66 L909.94 480.00 L910.15 477.15 L910.35 474.06 L910.55 471.45 L910.76 468.60 L910.96 465.76 L911.16 464.01 L911.37 460.06 L911.57 457.21 L912.55 457.21 L912.69 455.82 L912.84 453.71 L912.99 451.84 L913.14 446.56 L913.29 443.90 L913.43 441.24 L913.58 438.55 L913.73 435.84 L913.88 433.25 L914.03 432.00 L914.17 427.92 L914.72 431.91 L915.26 434.43 L915.80 437.69 L916.21 435.22 L916.62 431.99 L917.02 429.14 L917.43 426.29 L917.75 429.22 L918.08 429.34 L918.41 433.02 L918.73 439.60 L919.06 440.94 L919.87 438.30 L920.68 437.69 L921.50 439.90 L922.31 440.94 L922.83 438.34 L923.35 435.73 L923.87 433.13 L924.39 430.80 L924.91 427.92 L926.05 431.28 L927.19 434.43 L927.34 430.91 L927.49 429.10 L927.64 426.44 L927.78 423.78 L927.93 421.12 L928.08 418.45 L928.23 415.79 L928.38 412.14 L928.52 410.85 L928.67 406.44 L928.82 405.14 L929.69 401.88 L930.56 398.63 L931.42 395.37 L932.24 393.75 L933.05 392.12 L933.32 389.41 L933.59 387.42 L933.86 383.98 L934.14 381.27 L934.41 377.19 L934.68 375.85 L934.94 373.25 L935.20 370.64 L935.46 371.42 L935.72 365.53 L935.98 362.83 L936.96 361.20 L937.93 359.57 L938.19 356.97 L938.45 354.37 L938.71 351.30 L938.97 349.16 L939.24 346.55 L939.89 341.43 L940.54 343.68 L941.19 339.26 L941.84 335.16 L942.22 332.18 L942.60 329.96 L942.98 326.04 L943.36 323.23 L943.74 320.25 L944.12 317.26 L944.39 314.55 L944.66 311.84 L944.93 309.13 L945.20 305.75 L945.47 303.70 L945.74 300.99 L946.40 296.46 L947.05 293.25 L947.70 291.22 L948.84 287.97 L949.98 284.72 L950.16 282.00 L950.34 279.29 L950.52 270.45 L950.70 273.87 L950.88 271.15 L951.06 267.77 L951.24 267.58 L951.42 263.02 L951.60 260.31 L952.15 255.96 L952.69 253.80 L953.23 250.54 L954.21 245.66 L954.59 242.95 L954.97 240.23 L955.35 238.88 L955.73 236.88 L956.11 232.10 L956.48 229.39 L956.76 226.67 L957.03 224.28 L957.30 221.86 L957.57 218.54 L957.84 216.26 L958.11 213.11 L958.44 215.72 L958.76 218.32 L959.09 220.15 L959.41 223.53 L959.74 226.13 L960.15 223.28 L960.55 220.80 L960.96 217.59 L961.37 214.74 L962.23 217.62 L963.10 221.01 L963.97 222.88 L964.73 221.25 L965.49 219.62 L966.25 217.99 L967.33 221.25 L968.42 224.64 L969.50 227.76 L969.83 221.42 L970.15 221.90 L970.48 218.97 L970.81 214.67 L971.13 213.11 L972.76 213.11 L973.30 215.82 L973.84 218.54 L974.39 221.25 L976.66 221.25 L977.18 225.24 L977.71 227.11 L978.23 230.04 L978.75 232.97 L979.27 235.90 L979.43 238.50 L979.59 241.53 L979.76 241.17 L979.92 246.31 L980.08 248.91 L980.24 253.12 L980.41 254.12 L980.57 254.66 L980.73 259.93 L980.90 261.93 L981.71 261.17 L982.52 265.19 L982.75 267.98 L982.99 270.77 L983.22 276.47 L983.45 277.19 L983.68 281.55 L983.92 281.78 L984.15 284.72 L984.42 287.43 L984.69 290.64 L984.96 295.63 L985.23 295.56 L985.51 297.59 L985.78 300.99 L986.10 303.59 L986.43 306.20 L986.75 310.78 L987.08 311.40 L987.40 314.01 L989.03 314.01 L989.26 318.26 L989.50 319.59 L989.73 322.38 L989.96 322.78 L990.19 328.16 L990.43 330.75 L990.66 333.54 L991.80 335.16 L992.94 336.79 L993.04 339.42 L993.14 342.05 L993.24 345.34 L993.34 347.31 L993.44 350.71 L993.54 352.03 L993.64 355.19 L993.74 358.74 L993.84 360.45 L993.94 362.59 L994.04 365.71 L994.14 365.88 L994.24 370.96 L994.34 375.04 L994.44 375.98 L994.54 378.85 L994.64 381.17 L994.74 383.83 L994.84 388.04 L994.94 389.37 L995.04 390.74 L995.14 394.62 L995.24 397.25 L995.34 399.88 L995.44 402.51 L995.54 405.14 L995.61 407.76 L995.68 411.23 L995.75 413.78 L995.82 412.81 L995.89 418.23 L995.97 420.85 L996.04 421.62 L996.11 426.96 L996.18 428.70 L996.25 431.32 L996.32 433.94 L996.39 436.55 L996.46 439.17 L996.53 441.79 L996.60 444.99 L996.67 447.02 L996.74 449.57 L996.81 452.26 L996.89 456.20 L996.96 457.50 L997.03 460.11 L997.10 462.73 L997.17 465.35 L997.24 468.67 L997.31 474.52 L997.38 473.20 L997.45 475.82 L997.52 478.44 L997.59 481.06 L997.66 483.68 L997.73 486.29 L997.81 488.91 L997.88 492.78 L997.95 494.15 L998.02 498.70 L998.09 500.54 L998.16 502.00 L998.23 505.08 L998.30 509.08 L998.37 509.85 L998.44 512.47 L998.51 514.53 L998.58 517.71 L998.65 520.33 L998.73 522.94 L998.80 525.56 L999.01 526.26 L999.23 527.68 L999.45 532.65 L999.66 535.98 L999.88 539.32 L1000.10 541.18 L1000.31 543.79 L1000.53 545.32 L1000.75 549.00 L1000.97 551.60 L1001.18 554.20 L1001.40 556.88 L1001.62 559.41 L1001.83 562.01 L1002.05 564.62 L1003.19 569.66 L1004.33 571.13 L1004.59 573.73 L1004.85 576.33 L1005.11 576.30 L1005.37 581.54 L1005.63 585.90 L1005.89 588.50 L1006.15 589.35 L1006.41 589.84 L1006.67 594.56 L1006.93 597.16 L1007.16 599.95 L1007.40 603.65 L1007.63 605.53 L1007.86 609.97 L1008.09 611.11 L1008.33 613.90 L1008.56 616.69 L1010.19 613.44 L1010.33 616.09 L1010.47 618.74 L1010.61 621.39 L1010.75 624.04 L1010.88 626.69 L1011.02 629.34 L1011.16 631.99 L1013.81 631.99 L1016.46 631.99 L1019.11 631.99 L1021.76 631.99 L1024.41 631.99 L1027.06 631.99 L1029.72 631.99 L1029.88 629.16 L1030.04 626.33 L1030.20 623.49 L1030.37 620.66 L1030.53 617.83 L1030.69 615.00 L1030.85 612.17 L1031.02 609.34 L1031.18 606.51 L1031.34 603.67 L1031.53 600.99 L1031.73 598.31 L1031.92 595.63 L1032.11 592.95 L1032.30 590.27 L1032.49 587.59 L1032.68 584.91 L1032.87 582.23 L1033.07 579.77 L1033.26 576.87 L1033.45 573.21 L1033.64 571.51 L1033.83 568.83 L1034.02 566.15 L1034.21 563.42 L1034.41 560.79 L1034.60 558.11 L1034.81 555.50 L1035.03 553.54 L1035.25 551.23 L1035.47 547.69 L1035.68 545.09 L1035.90 545.35 L1036.12 539.88 L1036.33 537.28 L1036.55 534.67 L1036.77 530.78 L1036.98 529.98 L1037.20 526.86 L1037.42 523.13 L1037.63 521.66 L1037.85 519.05 L1038.00 516.39 L1038.15 513.73 L1038.30 511.06 L1038.44 512.45 L1038.59 504.66 L1038.74 503.07 L1038.89 499.48 L1039.04 498.43 L1039.18 495.25 L1039.33 492.42 L1039.48 489.76 L1039.63 486.68 L1039.78 482.78 L1039.92 481.77 L1040.07 479.77 L1040.22 476.43 L1040.37 475.22 L1040.51 471.12 L1040.66 466.77 L1040.81 465.79 L1040.96 463.13 L1041.11 460.47 L1041.31 459.85 L1041.51 455.18 L1041.72 452.53 L1041.92 449.89 L1042.12 447.25 L1042.33 443.50 L1042.53 443.31 L1042.73 439.31 L1042.91 436.60 L1043.10 434.42 L1043.28 431.18 L1043.46 432.10 L1043.64 425.75 L1043.82 423.04 L1044.00 418.92 L1044.18 416.75 L1044.36 414.90 L1044.90 412.19 L1045.45 409.48 L1045.99 406.77 L1046.80 410.02 L1047.62 413.28 L1048.16 410.56 L1048.70 407.85 L1049.24 405.14 L1050.11 410.73 L1050.98 411.65 L1051.85 414.90 L1052.61 412.19 L1053.37 409.48 L1054.13 406.77 L1055.75 404.56 L1057.38 406.77 L1057.79 405.22 L1058.19 401.07 L1058.60 397.40 L1059.01 395.37 L1059.33 391.66 L1059.66 390.17 L1059.98 387.56 L1060.31 384.96 L1060.63 382.36 L1060.96 379.75 L1061.29 377.15 L1061.61 374.54 L1061.94 373.00 L1062.26 369.34 L1063.56 366.08 L1064.87 362.83 L1065.19 360.04 L1065.52 352.23 L1065.84 353.99 L1066.17 351.67 L1066.49 348.88 L1066.82 346.09 L1067.14 343.30 L1067.52 338.82 L1067.89 341.37 L1068.26 332.43 L1068.63 332.14 L1069.00 329.35 L1069.38 326.56 L1069.75 323.77 L1070.51 320.52 L1071.27 319.74 L1072.03 314.01 L1072.49 311.22 L1072.96 308.11 L1073.42 305.37 L1073.89 302.85 L1074.35 297.84 L1074.82 297.27 L1075.28 294.48 L1075.82 291.22 L1076.37 285.19 L1076.91 284.72 L1077.29 282.00 L1077.67 279.29 L1078.05 276.58 L1078.43 273.17 L1078.81 271.15 L1079.19 268.44 L1080.00 266.81 L1080.81 265.19 L1081.25 262.47 L1081.68 259.76 L1082.12 257.05 L1082.55 254.78 L1082.98 251.63 L1083.42 248.91 L1083.88 242.08 L1084.35 243.33 L1084.81 239.63 L1085.28 237.75 L1085.74 234.97 L1086.21 232.18 L1086.67 229.39 L1086.96 226.74 L1087.24 223.73 L1087.53 221.45 L1087.81 220.09 L1088.10 216.16 L1088.38 211.93 L1088.67 210.87 L1088.95 208.23 L1089.60 210.21 L1090.25 214.19 L1090.90 217.99 L1091.66 214.74 L1092.42 211.48 L1093.18 208.23 L1094.27 211.48 L1095.35 215.85 L1096.44 217.99 L1097.20 214.74 L1097.95 208.90 L1098.71 208.23 L1099.37 211.53 L1100.02 213.84 L1100.67 216.77 L1101.32 219.62 L1102.19 214.08 L1103.05 213.11 L1103.92 209.86 L1105.06 210.08 L1106.20 213.11 L1106.74 215.82 L1107.29 218.54 L1107.83 221.25 L1108.37 223.96 L1108.91 218.90 L1109.45 229.39 L1109.64 232.10 L1109.83 236.85 L1110.02 237.85 L1110.21 242.34 L1110.40 243.02 L1110.59 245.66 L1110.78 248.37 L1110.97 251.08 L1111.16 253.80 L1111.35 255.78 L1111.54 259.22 L1111.73 261.93 L1112.60 265.35 L1113.47 268.44 L1114.34 271.70 L1114.71 274.49 L1115.08 278.18 L1115.45 280.07 L1115.82 282.37 L1116.20 286.08 L1116.57 288.43 L1116.94 291.22 L1117.23 294.07 L1117.51 297.07 L1117.79 301.49 L1118.08 302.62 L1118.36 306.60 L1118.65 308.31 L1118.93 308.09 L1119.22 314.01 L1119.60 317.51 L1119.98 320.92 L1120.36 322.64 L1120.74 324.86 L1121.12 327.57 L1121.50 330.28 L1122.15 332.99 L1122.80 335.71 L1123.45 338.42 L1123.54 341.09 L1123.63 343.76 L1123.72 346.42 L1123.81 346.68 L1123.91 351.76 L1124.00 355.76 L1124.09 357.10 L1124.18 359.77 L1124.27 362.44 L1124.36 365.11 L1124.45 370.06 L1124.54 368.46 L1124.63 373.89 L1124.73 375.78 L1124.82 372.46 L1124.91 381.12 L1125.00 383.91 L1125.09 386.46 L1125.18 390.37 L1125.27 391.79 L1125.36 395.33 L1125.45 397.13 L1125.55 399.80 L1125.64 402.47 L1125.73 405.14 L1125.85 407.85 L1125.98 410.56 L1126.11 413.11 L1126.23 415.99 L1126.36 419.90 L1126.49 420.34 L1126.61 424.12 L1126.74 428.95 L1126.87 429.93 L1126.99 431.37 L1127.12 434.97 L1127.25 437.69 L1127.37 440.40 L1127.50 443.11 L1127.63 437.14 L1127.75 449.37 L1127.88 452.50 L1128.01 453.96 L1128.08 456.61 L1128.15 455.95 L1128.22 461.91 L1128.30 463.85 L1128.37 466.91 L1128.44 469.87 L1128.51 472.52 L1128.59 473.25 L1128.66 477.83 L1128.73 480.48 L1128.80 483.13 L1128.87 485.78 L1128.95 488.43 L1129.02 491.09 L1129.09 492.17 L1129.16 496.39 L1129.24 499.04 L1129.31 501.69 L1129.38 504.35 L1129.45 507.00 L1129.53 509.47 L1129.60 512.30 L1129.67 514.95 L1129.74 517.61 L1129.81 521.79 L1129.89 530.13 L1129.96 525.56 L1130.07 528.17 L1130.19 530.77 L1130.30 529.80 L1130.41 535.98 L1130.53 538.58 L1130.64 541.18 L1130.76 545.24 L1130.87 546.39 L1130.98 549.00 L1131.10 551.60 L1131.21 554.20 L1131.33 558.42 L1131.44 559.07 L1131.55 562.01 L1131.67 564.89 L1131.78 567.22 L1131.90 569.83 L1132.01 574.70 L1132.12 574.01 L1132.24 577.64 L1132.53 580.30 L1132.83 583.93 L1133.13 585.63 L1133.42 588.29 L1133.72 591.06 L1134.01 593.61 L1134.31 595.82 L1134.60 597.50 L1134.90 601.60 L1135.20 604.76 L1135.49 606.93 L1136.03 609.64 L1136.58 612.35 L1137.12 618.12 L1137.66 618.01 L1138.20 621.31 L1138.75 623.20 L1139.29 626.13 L1139.83 629.06 L1140.37 631.99 L1143.26 631.99 L1146.14 631.99 L1149.02 631.99 L1151.91 631.99 L1154.79 631.99 L1157.67 631.99 L1160.55 631.99 L1160.75 629.16 L1160.94 626.33 L1161.14 623.49 L1161.33 620.66 L1161.53 617.83 L1161.72 615.00 L1161.92 612.17 L1162.12 609.34 L1162.31 606.51 L1162.51 603.67 L1162.64 602.67 L1162.77 597.07 L1162.91 595.63 L1163.04 592.95 L1163.18 590.27 L1163.31 587.59 L1163.44 584.91 L1163.58 579.73 L1163.71 579.55 L1163.85 576.87 L1163.98 574.19 L1164.11 571.51 L1164.25 568.83 L1164.38 565.39 L1164.52 560.23 L1164.65 561.28 L1164.78 558.11 L1165.06 555.40 L1165.33 552.68 L1165.60 549.93 L1165.87 547.26 L1166.14 545.14 L1166.41 541.83 L1166.56 539.02 L1166.71 536.21 L1166.86 532.58 L1167.00 533.50 L1167.15 529.43 L1167.30 526.74 L1167.45 523.74 L1167.60 515.76 L1167.74 517.80 L1167.89 513.73 L1168.04 510.92 L1168.25 502.20 L1168.45 505.65 L1168.66 503.02 L1168.87 499.67 L1169.07 496.86 L1169.28 491.81 L1169.49 496.14 L1169.70 488.43 L1169.90 489.25 L1170.11 483.17 L1170.32 480.00 L1170.60 479.62 L1170.88 474.42 L1171.15 471.63 L1171.43 468.84 L1171.71 466.05 L1171.99 465.25 L1172.27 460.47 L1172.40 457.76 L1172.52 455.04 L1172.65 454.41 L1172.78 449.62 L1172.90 447.71 L1173.03 444.19 L1173.16 441.48 L1173.28 440.25 L1173.41 436.06 L1173.54 431.36 L1173.66 430.63 L1173.79 427.92 L1173.92 428.19 L1174.04 422.50 L1174.17 425.07 L1174.30 417.07 L1174.42 414.50 L1174.55 411.65 L1175.31 408.39 L1176.07 405.14 L1176.83 401.88 L1177.48 396.93 L1178.13 395.37 L1178.78 392.12 L1179.92 393.75 L1181.06 395.37 L1182.69 390.49 L1183.77 391.58 L1184.85 392.66 L1185.94 393.75 L1186.46 390.82 L1186.98 389.86 L1187.50 384.96 L1188.02 382.03 L1188.54 379.10 L1189.30 375.85 L1190.06 372.59 L1190.82 369.34 L1191.28 368.86 L1191.73 370.39 L1192.19 362.94 L1192.64 358.92 L1193.10 356.32 L1193.38 353.00 L1193.66 349.61 L1193.94 349.92 L1194.22 345.16 L1194.49 343.87 L1194.77 339.58 L1195.05 336.79 L1195.51 333.73 L1195.96 330.45 L1196.42 328.98 L1196.88 326.21 L1197.33 323.77 L1197.66 318.18 L1197.98 320.50 L1198.31 317.79 L1198.63 311.37 L1198.96 309.82 L1199.28 307.18 L1199.61 304.24 L1200.04 301.53 L1200.48 298.82 L1200.91 296.28 L1201.35 293.54 L1201.78 290.22 L1202.21 287.97 L1203.08 284.72 L1203.95 280.80 L1204.82 278.21 L1205.36 274.95 L1205.90 271.70 L1206.44 268.44 L1206.68 265.65 L1206.91 262.75 L1207.14 260.07 L1207.37 257.28 L1207.61 254.57 L1207.84 251.70 L1208.07 248.91 L1208.53 247.47 L1208.98 243.71 L1209.44 242.03 L1209.89 237.87 L1210.35 235.90 L1210.68 233.69 L1211.00 230.32 L1211.33 229.02 L1211.65 224.74 L1211.98 221.95 L1212.30 219.16 L1212.63 216.37 L1213.50 213.11 L1214.36 209.19 L1215.23 206.60 L1215.46 205.07 L1215.70 201.54 L1215.93 198.23 L1216.16 195.44 L1216.39 192.65 L1216.63 189.86 L1216.86 187.07 L1217.67 185.45 L1218.49 183.82 L1218.76 181.11 L1219.03 179.26 L1219.30 175.68 L1219.57 172.97 L1219.84 175.13 L1220.11 167.55 L1220.44 163.64 L1220.76 161.15 L1221.09 160.98 L1221.42 156.32 L1221.74 154.53 L1222.39 153.23 L1223.04 151.00 L1223.69 151.93 L1224.34 146.81 L1225.00 148.02 L1225.81 152.48 L1226.62 154.53 L1227.38 151.27 L1228.14 148.02 L1228.90 144.76 L1229.39 147.61 L1229.88 150.87 L1230.37 153.64 L1230.85 156.16 L1231.61 153.44 L1232.37 151.84 L1233.13 148.02 L1233.95 145.82 L1234.76 150.46 L1235.57 153.40 L1236.39 152.90 L1237.20 154.12 L1238.01 151.80 L1238.83 157.61 L1239.64 157.78 L1239.97 160.57 L1240.29 163.36 L1240.62 166.17 L1240.94 174.54 L1241.27 171.42 L1241.59 178.08 L1241.92 177.31 L1242.90 178.14 L1243.87 180.57 L1244.20 183.36 L1244.52 186.14 L1244.85 189.69 L1245.17 191.72 L1245.50 201.53 L1245.83 196.92 L1246.15 200.09 L1246.48 202.88 L1246.80 210.36 L1247.13 208.46 L1247.45 211.25 L1247.78 214.04 L1248.10 216.83 L1248.43 219.62 L1249.30 222.88 L1250.17 226.13 L1251.03 229.39 L1251.36 231.99 L1251.68 234.59 L1252.01 237.20 L1252.34 243.74 L1252.66 242.40 L1253.80 240.70 L1254.94 245.66 L1255.26 247.23 L1255.59 251.08 L1255.92 253.80 L1256.24 256.51 L1256.57 259.22 L1256.89 261.93 L1256.98 264.56 L1257.07 267.41 L1257.15 269.82 L1257.24 272.45 L1257.33 274.49 L1257.42 276.62 L1257.51 280.33 L1257.59 282.18 L1257.68 285.59 L1257.77 288.22 L1257.86 290.85 L1257.94 293.48 L1258.03 296.11 L1258.12 298.74 L1258.21 301.07 L1258.29 304.06 L1258.38 306.62 L1258.47 311.25 L1258.56 314.88 L1258.64 314.51 L1258.73 317.14 L1258.82 319.77 L1258.91 322.41 L1258.99 325.02 L1259.08 327.55 L1259.17 330.28 L1259.26 332.92 L1259.35 335.55 L1259.43 338.20 L1259.52 337.92 L1259.61 343.48 L1259.70 346.11 L1259.79 348.87 L1259.87 348.53 L1259.96 356.83 L1260.05 355.38 L1260.14 359.31 L1260.23 361.95 L1260.31 364.78 L1260.40 367.23 L1260.49 369.86 L1260.58 372.50 L1260.67 374.15 L1260.75 377.78 L1260.84 380.42 L1260.93 383.56 L1261.02 385.84 L1261.11 388.34 L1261.19 390.98 L1261.28 393.62 L1261.37 396.25 L1261.46 396.68 L1261.55 401.53 L1261.63 404.17 L1261.72 406.81 L1261.81 409.45 L1261.90 412.09 L1261.98 414.73 L1262.07 417.37 L1262.16 421.93 L1262.25 425.03 L1262.34 425.28 L1262.42 427.92 L1262.53 430.60 L1262.64 434.06 L1262.75 435.73 L1262.86 438.34 L1262.97 440.94 L1263.08 444.18 L1263.18 448.60 L1263.29 448.75 L1263.40 451.35 L1263.51 453.96 L1263.62 457.85 L1263.73 459.17 L1263.84 459.66 L1263.94 464.37 L1264.05 464.77 L1264.16 469.58 L1264.27 472.18 L1264.38 476.72 L1264.49 474.76 L1264.59 480.00 L1264.70 482.60 L1264.81 485.20 L1264.92 487.81 L1265.03 489.21 L1265.14 493.01 L1265.25 495.62 L1265.35 498.22 L1265.46 502.56 L1265.57 503.43 L1265.68 506.03 L1266.49 507.66 L1267.31 509.29 L1267.76 512.22 L1268.22 515.15 L1268.67 519.11 L1269.13 521.00 L1269.59 523.93" fill="none" stroke="#ef9c3e" stroke-width="1.05" stroke-linejoin="round"/></svg>
<div class=abs style="left:497.25px;top:660.25px;width:29.50px;height:29.65px;background:#fff;border:1px solid #dddddd;border-radius:4px"></div>
<div class=abs style="left:533.1px;top:660.25px;width:30.50px;height:29.65px;background:#fff;border:1px solid #dddddd;border-radius:4px"></div>
<div class=abs style="left:570.25px;top:660.25px;width:30.50px;height:29.65px;background:#fff;border:1px solid #c9d2dc;border-radius:4px"></div>
<div class=abs style="left:797.25px;top:660.25px;width:29.50px;height:29.65px;background:#fff;border:1px solid #dddddd;border-radius:4px"></div>
<div class=abs style="left:833.25px;top:660.25px;width:100.50px;height:29.65px;background:#fff;border:1px solid #dddddd;border-radius:4px"></div>
<div class=abs style="left:940.25px;top:660.25px;width:29.50px;height:29.65px;background:#fff;border:1px solid #f0f0f0;border-radius:4px"></div>
<div class=abs style="left:904.4px;top:661px;width:1px;height:30px;background:#dddddd"></div>
<div class=abs style="left:1171.3px;top:660.25px;width:30.40px;height:29.65px;background:#fff;border:1px solid #dddddd;border-radius:4px"></div>
<div class=abs style="left:1208.2px;top:660.25px;width:30.40px;height:29.65px;background:#fff;border:1px solid #c9d2dc;border-radius:4px"></div>
<div class=abs style="left:1240.6px;top:660.25px;width:29.10px;height:29.65px;background:#fff;border:1px solid #dddddd;border-radius:4px"></div>
<svg class=abs style="left:510px;top:672px" width="5" height="8" viewBox="0 0 5 8"><path d="M4.4 0.5 V7.4 L0.6 3.95 Z" fill="#555"/></svg>
<svg class=abs style="left:1253.8px;top:672.3px" width="5" height="8" viewBox="0 0 5 8"><path d="M0.5 0.5 V7.2 L4.2 3.85 Z" fill="#555"/></svg>
<svg class=abs style="left:542px;top:667.6px" width="15" height="16" viewBox="0 0 15 16"><rect x="0.95" y="1.3" width="12.6" height="13" rx="0.9" fill="none" stroke="#999" stroke-width="0.9"/><path d="M0.95 5.55 H13.55" stroke="#999" stroke-width="0.9"/><rect x="3.25" y="0.1" width="1.85" height="2.7" fill="#999"/><rect x="9.2" y="0.1" width="1.85" height="2.7" fill="#999"/><rect x="8.3" y="9.1" width="3.8" height="3.7" fill="#999"/></svg>
<svg class=abs style="left:579px;top:669px" width="15" height="15" viewBox="0 0 15 15"><circle cx="7.2" cy="7" r="6.4" fill="none" stroke="#999" stroke-width="0.95"/><path d="M6.7 3.1 V7.55 H11" fill="none" stroke="#999" stroke-width="0.95"/></svg>
<svg class=abs style="left:1181.2px;top:667.6px" width="15" height="16" viewBox="0 0 15 16"><rect x="0.95" y="1.3" width="12.6" height="13" rx="0.9" fill="none" stroke="#999" stroke-width="0.9"/><path d="M0.95 5.55 H13.55" stroke="#999" stroke-width="0.9"/><rect x="3.25" y="0.1" width="1.85" height="2.7" fill="#999"/><rect x="9.2" y="0.1" width="1.85" height="2.7" fill="#999"/><rect x="8.3" y="9.1" width="3.8" height="3.7" fill="#999"/></svg>
<svg class=abs style="left:1217.6px;top:669px" width="15" height="15" viewBox="0 0 15 15"><circle cx="7.2" cy="7" r="6.4" fill="none" stroke="#999" stroke-width="0.95"/><path d="M6.7 3.1 V7.55 H11" fill="none" stroke="#999" stroke-width="0.95"/></svg>
<svg class=abs style="left:804.5px;top:667.5px" width="17" height="17" viewBox="0 0 17 17"><path d="M0.8 0.5 V16.2 H16.4" fill="none" stroke="#505050" stroke-width="0.85"/><path d="M0.8 8.1 H14.8" stroke="#505050" stroke-width="0.85"/><path d="M2.6 8.1 Q4.3 5.1 8 4.8 Q11.2 4.5 13.3 1.7" fill="none" stroke="#505050" stroke-width="1.25"/><path d="M1.7 16 V14.6 H4.8 V13.2 H7.6 V11.7 H10.5 V10.3 H13.4" fill="none" stroke="#505050" stroke-width="0.85"/></svg>
<div class=t style="left:846.27px;top:667.90px;font-size:14.30px;line-height:14.30px;font-weight:400;color:#1f2329;transform:scaleX(0.9690);transform-origin:0 0;">8 hours</div>
<svg class=abs style="left:914.2px;top:668.2px" width="12" height="15" viewBox="0 0 12 15"><path d="M3.15 3.55 A2.86 2.86 0 0 1 8.7 3.6 V5.6" fill="none" stroke="#4a4a4a" stroke-width="1"/><rect x="1.3" y="5.9" width="9.8" height="8.3" rx="1" fill="none" stroke="#4a4a4a" stroke-width="1"/><circle cx="5.86" cy="9.8" r="1.3" fill="#4a4a4a"/></svg>
<svg class=abs style="left:948px;top:668px" width="16" height="16" viewBox="0 0 16 16"><path d="M4.9 12.2 A5.3 5.3 0 1 0 3.5 8" fill="none" stroke="#cacaca" stroke-width="1.2"/><path d="M0.9 8 L3.5 10.5 L6 8 Z" fill="#cacaca"/><path d="M8.55 5.4 V8.3 L11 9.9" fill="none" stroke="#cacaca" stroke-width="1.1"/></svg>
<div class=abs style="left:497px;top:699.5px;width:772.7px;height:29.5px;border:1px solid #dddddd;background:#fff"></div>
<svg class=abs style="left:0;top:0" width="1280" height="800" viewBox="0 0 1280 800"><path d="M497.60 729.00 L498.90 702.98 L500.20 728.49 L501.36 702.84 L502.84 728.91 L503.94 703.73 L505.02 728.02 L506.43 703.15 L507.48 712.28 L508.67 701.39 L509.96 728.16 L511.36 702.80 L512.66 728.72 L514.26 703.82 L515.48 728.77 L516.57 703.60 L518.09 728.61 L519.60 701.30 L521.15 728.53 L522.42 701.52 L523.90 713.99 L525.48 707.45 L526.59 728.94 L527.73 702.98 L528.89 717.72 L530.00 702.56 L531.20 728.03 L532.42 703.95 L533.69 728.15 L534.79 704.27 L535.98 728.23 L537.20 712.16 L538.38 728.40 L539.68 704.18 L541.05 728.13 L542.18 704.03 L543.37 728.81 L544.93 701.89 L546.47 728.40 L547.58 701.42 L548.76 728.30 L550.26 703.09 L551.41 712.74 L552.77 703.86 L553.97 728.08 L555.03 702.11 L556.11 728.82 L557.48 701.69 L559.02 728.02 L560.45 703.05 L561.52 728.98 L562.95 712.91 L564.27 728.27 L565.87 701.53 L567.32 728.10 L568.76 703.68 L570.00 728.31 L571.53 702.55 L573.06 728.43 L574.32 703.05 L575.41 728.36 L576.94 703.48 L578.40 728.42 L579.91 701.55 L580.98 728.40 L582.15 703.40 L583.54 728.08 L584.60 702.20 L585.76 728.83 L587.17 702.63 L588.40 728.33 L589.69 703.72 L591.22 728.62 L592.45 701.71 L593.96 728.15 L595.53 702.13 L596.83 728.72 L598.10 703.18 L599.33 728.16 L600.63 716.22 L601.70 728.29 L602.92 705.90 L604.22 728.98 L605.40 712.81 L606.70 728.37 L608.19 704.18 L609.35 728.52 L610.41 702.72 L611.55 728.73 L612.99 702.86 L614.45 728.61 L616.00 701.56 L617.45 728.87 L618.84 704.03 L620.21 728.12 L621.78 702.69 L622.94 728.28 L624.34 703.45 L625.89 728.02 L627.23 703.67 L628.78 728.14 L629.88 702.62 L631.35 719.71 L632.44 703.70 L633.67 711.78 L635.00 703.47 L636.43 728.05 L638.01 701.56 L639.34 728.71 L640.75 702.87 L642.10 728.69 L643.62 704.00 L645.14 728.03 L646.50 701.90 L647.83 721.63 L649.16 702.50 L650.52 728.51 L651.61 702.92 L653.18 728.08 L654.49 701.68 L655.99 728.10 L657.22 701.87 L658.78 728.87 L659.84 701.88 L661.27 728.68 L662.66 701.61 L663.78 728.49 L664.93 702.89 L666.19 728.59 L667.33 701.91 L668.73 728.47 L670.12 703.87 L671.57 728.19 L672.80 702.24 L673.97 728.00 L675.09 702.02 L676.28 728.90 L677.57 703.67 L678.84 712.41 L680.26 704.03 L681.38 728.49 L682.70 703.36 L683.79 716.62 L685.12 703.01 L686.28 728.80 L687.87 704.87 L689.44 728.54 L690.67 702.70 L691.96 718.41 L693.47 701.84 L694.93 728.59 L696.07 716.50 L697.56 728.30 L698.96 702.51 L700.29 728.02 L701.48 704.03 L702.96 728.19 L704.50 703.94 L705.97 728.23 L707.42 701.51 L708.73 728.99 L710.13 703.17 L711.70 728.33 L713.11 703.01 L714.38 728.00 L715.81 703.59 L716.87 728.38 L718.06 706.74 L719.32 728.90 L720.87 702.95 L722.45 728.43 L723.85 712.37 L725.32 728.95 L726.46 702.72 L727.78 721.34 L729.06 702.88 L730.31 728.71 L731.67 702.15 L732.88 728.99 L733.96 701.77 L735.22 728.10 L736.30 704.27 L737.39 728.09 L738.70 704.22 L740.04 728.06 L741.35 704.24 L742.73 728.88 L744.03 711.39 L745.15 728.56 L746.45 702.09 L747.73 728.22 L749.33 704.16 L750.51 728.89 L751.99 703.17 L753.19 728.31 L754.57 703.20 L755.72 728.75 L757.27 704.85 L758.47 728.57 L759.58 705.21 L761.00 728.45 L762.26 702.74 L763.50 728.26 L764.59 701.66 L765.98 728.23 L767.26 702.07 L768.52 728.35 L769.75 702.95 L771.30 728.57 L772.40 705.16 L773.77 728.52 L774.98 706.99 L776.39 728.92 L777.84 703.38 L778.97 728.64 L780.22 701.65 L781.59 728.08 L783.14 702.61 L784.36 728.68 L785.92 703.98 L787.17 728.63 L788.44 702.46 L789.80 728.20 L791.31 702.99 L792.77 728.12 L793.84 702.85 L795.20 728.03 L796.69 701.49 L798.17 718.84 L799.72 701.55 L800.85 728.25 L802.03 701.96 L803.37 728.24 L804.61 704.20 L805.93 728.46 L807.37 704.04 L808.87 728.33 L810.36 703.80 L811.94 728.36 L813.38 703.71 L814.66 728.85 L816.26 702.43 L817.42 728.58 L819.00 701.48 L820.12 728.35 L821.27 701.49 L822.64 711.30 L823.79 701.95 L825.23 728.41 L826.38 702.14 L827.85 728.69 L829.35 702.74 L830.89 728.09 L832.24 704.17 L833.41 728.95 L834.90 702.45 L836.24 728.73 L837.65 710.62 L838.90 728.20 L840.28 701.77 L841.51 728.74 L842.85 703.21 L844.04 728.47 L845.52 701.30 L847.03 713.24 L848.48 701.59 L849.78 728.04 L851.30 702.21 L852.58 719.92 L853.75 702.93 L854.89 728.17 L856.11 701.53 L857.41 728.28 L858.84 701.62 L860.15 728.03 L861.55 701.34 L863.00 728.76 L864.30 701.33 L865.79 728.79 L867.00 702.43 L868.21 728.66 L869.63 702.07 L871.08 728.67 L872.44 703.47 L873.94 711.13 L875.37 703.42 L876.64 728.16 L877.74 701.98 L878.86 721.05 L880.14 702.83 L881.61 728.18 L882.84 709.61 L884.28 728.02 L885.69 708.63 L886.93 714.53 L888.26 703.67 L889.65 728.84 L891.19 702.94 L892.52 728.86 L894.11 702.85 L895.62 728.80 L897.02 707.42 L898.38 728.30 L899.94 702.38 L901.06 720.85 L902.41 702.98 L903.61 728.09 L905.11 703.10 L906.61 728.71 L907.79 703.02 L908.94 710.38 L910.09 704.26 L911.51 728.69 L912.96 702.44 L914.45 728.98 L915.76 701.73 L917.12 728.83 L918.32 703.00 L919.72 728.96 L920.85 704.18 L922.16 728.59 L923.59 703.57 L924.91 728.01 L926.43 702.53 L927.79 728.09 L929.13 702.60 L930.35 728.95 L931.90 703.50 L933.36 728.70 L934.45 701.67 L935.78 718.34 L937.12 702.02 L938.38 720.94 L939.97 703.30 L941.25 728.19 L942.71 703.00 L943.81 716.45 L945.38 701.30 L946.60 720.74 L948.10 702.49 L949.47 720.78 L950.69 702.80 L952.28 728.53 L953.49 704.07 L954.65 728.16 L955.96 701.82 L957.55 728.80 L958.71 705.49 L960.16 728.69 L961.69 703.44 L963.12 728.06 L964.21 701.97 L965.65 728.80 L966.83 703.29 L968.09 728.34 L969.46 701.99 L971.02 728.33 L972.42 701.57 L973.72 728.47 L974.79 703.10 L975.98 713.42 L977.45 702.04 L978.80 728.81 L980.39 701.40 L981.85 728.62 L983.18 701.84 L984.58 728.64 L986.06 702.85 L987.58 728.32 L989.15 701.82 L990.29 728.39 L991.58 703.62 L993.07 728.76 L994.24 703.04 L995.31 728.40 L996.68 703.92 L997.81 728.98 L999.10 702.63 L1000.59 728.93 L1001.95 702.93 L1003.13 728.85 L1004.20 702.24 L1005.54 728.74 L1006.64 703.76 L1007.83 728.84 L1009.34 709.75 L1010.59 728.78 L1011.66 702.77 L1013.26 728.86 L1014.71 701.42 L1016.25 728.86 L1017.47 704.48 L1019.07 728.24 L1020.24 702.06 L1021.43 728.54 L1022.68 702.31 L1024.06 728.96 L1025.47 701.48 L1026.90 728.14 L1028.44 702.69 L1029.95 728.62 L1031.12 702.34 L1032.47 728.84 L1033.64 702.70 L1034.94 728.01 L1036.46 701.91 L1037.55 728.31 L1038.75 701.36 L1039.95 728.61 L1041.39 702.11 L1042.52 728.06 L1044.00 703.47 L1045.06 728.68 L1046.15 703.95 L1047.63 714.73 L1048.81 701.42 L1050.19 728.97 L1051.47 702.93 L1052.91 728.74 L1054.32 701.74 L1055.53 728.29 L1056.79 703.90 L1058.00 728.66 L1059.07 701.37 L1060.43 728.19 L1061.65 703.31 L1062.82 728.31 L1064.39 703.91 L1065.79 728.91 L1067.06 701.48 L1068.29 728.50 L1069.42 702.51 L1070.57 728.33 L1071.67 702.33 L1072.80 728.42 L1074.15 709.48 L1075.40 728.94 L1076.48 702.79 L1077.79 728.67 L1078.86 702.34 L1080.22 728.74 L1081.37 702.71 L1082.94 728.64 L1084.51 703.61 L1085.90 728.59 L1087.11 703.79 L1088.37 711.63 L1089.69 702.23 L1091.28 728.85 L1092.46 703.34 L1093.51 728.46 L1094.69 702.78 L1096.04 728.38 L1097.55 704.21 L1098.79 728.11 L1100.23 703.39 L1101.81 728.18 L1103.20 702.77 L1104.46 728.71 L1105.80 702.01 L1107.03 728.82 L1108.15 705.43 L1109.59 728.89 L1111.06 702.74 L1112.59 713.05 L1113.92 703.69 L1115.36 728.75 L1116.59 702.30 L1118.10 728.17 L1119.39 703.42 L1120.89 714.52 L1122.31 701.99 L1123.37 728.41 L1124.95 701.70 L1126.23 728.37 L1127.80 713.99 L1128.91 728.96 L1130.36 704.28 L1131.60 728.97 L1132.91 702.42 L1134.40 728.16 L1135.67 703.15 L1137.26 728.61 L1138.61 703.70 L1139.75 728.89 L1140.94 702.76 L1142.17 728.98 L1143.30 703.18 L1144.47 728.52 L1145.67 716.50 L1146.89 728.92 L1148.20 704.29 L1149.73 728.52 L1151.22 711.71 L1152.63 728.38 L1154.20 703.89 L1155.49 728.17 L1156.64 701.38 L1157.76 728.93 L1159.22 702.23 L1160.28 728.79 L1161.33 702.88 L1162.82 728.26 L1164.31 703.78 L1165.90 728.90 L1167.17 703.42 L1168.72 728.98 L1169.90 702.47 L1171.31 728.19 L1172.71 702.36 L1174.26 714.02 L1175.72 701.93 L1177.07 728.32 L1178.18 701.73 L1179.46 728.99 L1180.73 702.26 L1182.31 728.80 L1183.53 717.83 L1184.82 728.04 L1186.10 703.42 L1187.30 728.32 L1188.52 701.85 L1190.12 728.85 L1191.38 703.23 L1192.76 728.11 L1194.16 702.81 L1195.27 728.16 L1196.57 703.30 L1197.83 728.77 L1199.20 712.78 L1200.49 728.41 L1202.06 701.76 L1203.65 728.26 L1205.11 704.27 L1206.64 728.87 L1207.96 702.00 L1209.36 728.06 L1210.85 702.83 L1211.94 728.13 L1213.12 703.72 L1214.47 728.13 L1215.67 711.77 L1217.16 728.51 L1218.65 703.87 L1220.00 728.09 L1221.13 704.52 L1222.37 728.14 L1223.49 701.85 L1225.00 728.38 L1226.09 704.26 L1227.49 728.12 L1228.65 703.31 L1229.71 728.66 L1231.10 702.14 L1232.53 718.33 L1233.84 717.17 L1235.23 728.64 L1236.82 703.37 L1238.07 728.69 L1239.20 703.19 L1240.70 728.59 L1242.03 704.12 L1243.47 728.76 L1244.68 703.92 L1246.20 728.32 L1247.76 702.46 L1249.14 715.03 L1250.34 702.62 L1251.56 728.31 L1252.74 702.53 L1254.28 728.75 L1255.52 703.76 L1256.90 720.76 L1257.99 702.39 L1259.44 728.33 L1260.99 712.86 L1262.29 728.64 L1263.52 703.31 L1265.10 728.02 L1266.37 703.79 L1267.80 715.55 L1268.50 703.27" fill="none" stroke="#f3b877" stroke-width="0.95" stroke-linejoin="miter"/></svg>
<div class=abs style="left:1267.2px;top:706.9px;width:4.7px;height:18.2px;background:#1f1f1f;border-radius:1.5px"></div>
<div class=abs style="left:1268.3px;top:699.8px;width:2.6px;height:42.3px;border:0.6px solid #222;border-radius:2px;box-sizing:border-box"></div>
<div class=abs style="left:1268.4px;top:733px;width:2.5px;height:5.8px;background:#9a9a9a"></div>
<div class=abs style="left:497px;top:743.5px;width:774.5px;height:1px;background:#1f2329"></div>
<div class=abs style="left:496.50px;top:744px;width:1px;height:3.7px;background:#1f2329"></div>
<div class=abs style="left:528.25px;top:744px;width:1px;height:3.7px;background:#1f2329"></div>
<div class=abs style="left:660.75px;top:744px;width:1px;height:3.7px;background:#1f2329"></div>
<div class=abs style="left:789.50px;top:744px;width:1px;height:3.7px;background:#1f2329"></div>
<div class=abs style="left:921.75px;top:744px;width:1px;height:3.7px;background:#1f2329"></div>
<div class=abs style="left:1054.50px;top:744px;width:1px;height:3.7px;background:#1f2329"></div>
<div class=abs style="left:1174.40px;top:744px;width:1px;height:3.7px;background:#1f2329"></div>
<div class=abs style="left:1270.50px;top:744px;width:1px;height:3.7px;background:#1f2329"></div>
<div class=t style="left:520.76px;top:749.69px;font-size:9.70px;line-height:9.70px;font-weight:400;color:#1f2329;transform:scaleX(1.1032);transform-origin:0 0;">Oct</div>
<div class=t style="left:652.43px;top:749.69px;font-size:9.70px;line-height:9.70px;font-weight:400;color:#1f2329;transform:scaleX(1.0620);transform-origin:0 0;">Nov</div>
<div class=t style="left:781.39px;top:749.69px;font-size:9.70px;line-height:9.70px;font-weight:400;color:#1f2329;transform:scaleX(1.0379);transform-origin:0 0;">Dec</div>
<div class=t style="left:911.46px;top:749.69px;font-size:9.70px;line-height:9.70px;font-weight:400;color:#1f2329;">2022</div>
<div class=t style="left:1046.64px;top:749.69px;font-size:9.70px;line-height:9.70px;font-weight:400;color:#1f2329;">Feb</div>
<div class=t style="left:1166.55px;top:749.69px;font-size:9.70px;line-height:9.70px;font-weight:400;color:#1f2329;">Mar</div>
<div class=abs style="left:497px;top:768.2px;width:242.7px;height:21.4px;background:#fff;border:1px solid #dddddd;border-radius:4px;overflow:hidden"><div class=abs style="left:139.8px;top:0;width:35.2px;height:21px;background:#eef4fa"></div></div>
<div class=abs style="left:529.90px;top:769.4px;width:1px;height:21px;background:#dddddd"></div>
<div class=abs style="left:565.80px;top:769.4px;width:1px;height:21px;background:#dddddd"></div>
<div class=abs style="left:600.90px;top:769.4px;width:1px;height:21px;background:#dddddd"></div>
<div class=abs style="left:636.80px;top:769.4px;width:1px;height:21px;background:#dddddd"></div>
<div class=abs style="left:672.00px;top:769.4px;width:1px;height:21px;background:#dddddd"></div>
<div class=abs style="left:702.90px;top:769.4px;width:1px;height:21px;background:#dddddd"></div>
<div class=t style="left:505.84px;top:773.49px;font-size:12.30px;line-height:12.30px;font-weight:400;color:#1f2329;">1D</div>
<div class=t style="left:539.12px;top:773.49px;font-size:12.30px;line-height:12.30px;font-weight:400;color:#1f2329;">1W</div>
<div class=t style="left:575.31px;top:773.49px;font-size:12.30px;line-height:12.30px;font-weight:400;color:#1f2329;">1M</div>
<div class=t style="left:610.81px;top:773.49px;font-size:12.30px;line-height:12.30px;font-weight:400;color:#1f2329;">3M</div>
<div class=t style="left:646.36px;top:773.49px;font-size:12.30px;line-height:12.30px;font-weight:400;color:#0a5cb8;">6M</div>
<div class=t style="left:680.43px;top:773.49px;font-size:12.30px;line-height:12.30px;font-weight:400;color:#1f2329;">1Y</div>
<div class=t style="left:711.61px;top:773.49px;font-size:12.30px;line-height:12.30px;font-weight:400;color:#1f2329;">ALL</div>
<div class=abs style="left:758.4px;top:768.2px;width:100.3px;height:21.4px;background:#fff;border:1px solid #dddddd;border-radius:4px"></div>
<div class=abs style="left:836.9px;top:769.4px;width:1px;height:21px;background:#dddddd"></div>
<div class=t style="left:766.72px;top:773.67px;font-size:12.20px;line-height:12.20px;font-weight:400;color:#1f2329;transform:scaleX(0.9616);transform-origin:0 0;">CUSTOM</div>
<svg class=abs style="left:823px;top:777.8px" width="8.5" height="5" viewBox="0 0 8.5 5"><path d="M0.2 4.6 H8.1 L4.15 0.4 Z" fill="#aaaaaa"/></svg>
<svg class=abs style="left:843.2px;top:776.3px" width="12.5" height="9.5" viewBox="0 0 12.5 9.5"><rect x="0.6" y="0.6" width="11" height="8" rx="1" fill="none" stroke="#555" stroke-width="1"/><path d="M6.1 2.2 L5.2 3.1 H7 Z M6.1 7 L5.2 6.1 H7 Z M2.2 4.6 L3.1 3.7 V5.5 Z M10 4.6 L9.1 3.7 V5.5 Z" fill="#555"/></svg>
<div class=abs style="left:455px;top:407px;width:14.5px;height:50.5px;background:#fff;border:1px solid #dddddd;border-radius:4px"></div>
<div class=abs style="left:456px;top:443px;width:14.5px;height:1px;background:#dddddd"></div>
<div class=abs style="left:461px;top:414px;width:1px;height:22px;background:#909090"></div>
<div class=abs style="left:464px;top:414px;width:1px;height:22px;background:#909090"></div>
<svg class=abs style="left:460.6px;top:447.5px" width="5.5" height="5.5" viewBox="0 0 5.5 5.5"><path d="M0.4 0.4 L5.1 5.1 M5.1 0.4 L0.4 5.1" stroke="#8a8a8a" stroke-width="0.8"/></svg>
</div>
<svg style="position:absolute;left:0;top:0" width="2760" height="1800" viewBox="0 0 2760 1800"><line x1="206" y1="258" x2="1050" y2="258" stroke="#6f00ff" stroke-width="4" stroke-dasharray="24 8.4615" stroke-dashoffset="12"/><line x1="206" y1="1238" x2="1050" y2="1238" stroke="#6f00ff" stroke-width="4" stroke-dasharray="24 8.4615" stroke-dashoffset="12"/><line x1="208" y1="256" x2="208" y2="1240" stroke="#6f00ff" stroke-width="4" stroke-dasharray="24 7.7419" stroke-dashoffset="12"/><line x1="1048" y1="256" x2="1048" y2="1240" stroke="#6f00ff" stroke-width="4" stroke-dasharray="24 7.7419" stroke-dashoffset="12"/><rect x="588" y="240" width="336" height="64" rx="10" ry="10" fill="#6f00ff"/></svg>
<div style="position:absolute;left:0;top:0;width:2760px;height:1800px"><div class=t style="left:651.50px;top:256.31px;font-size:32.00px;line-height:32.00px;font-weight:700;color:#ffffff;transform:scaleX(0.9134);transform-origin:0 0;">Search options</div></div>
</body></html>
